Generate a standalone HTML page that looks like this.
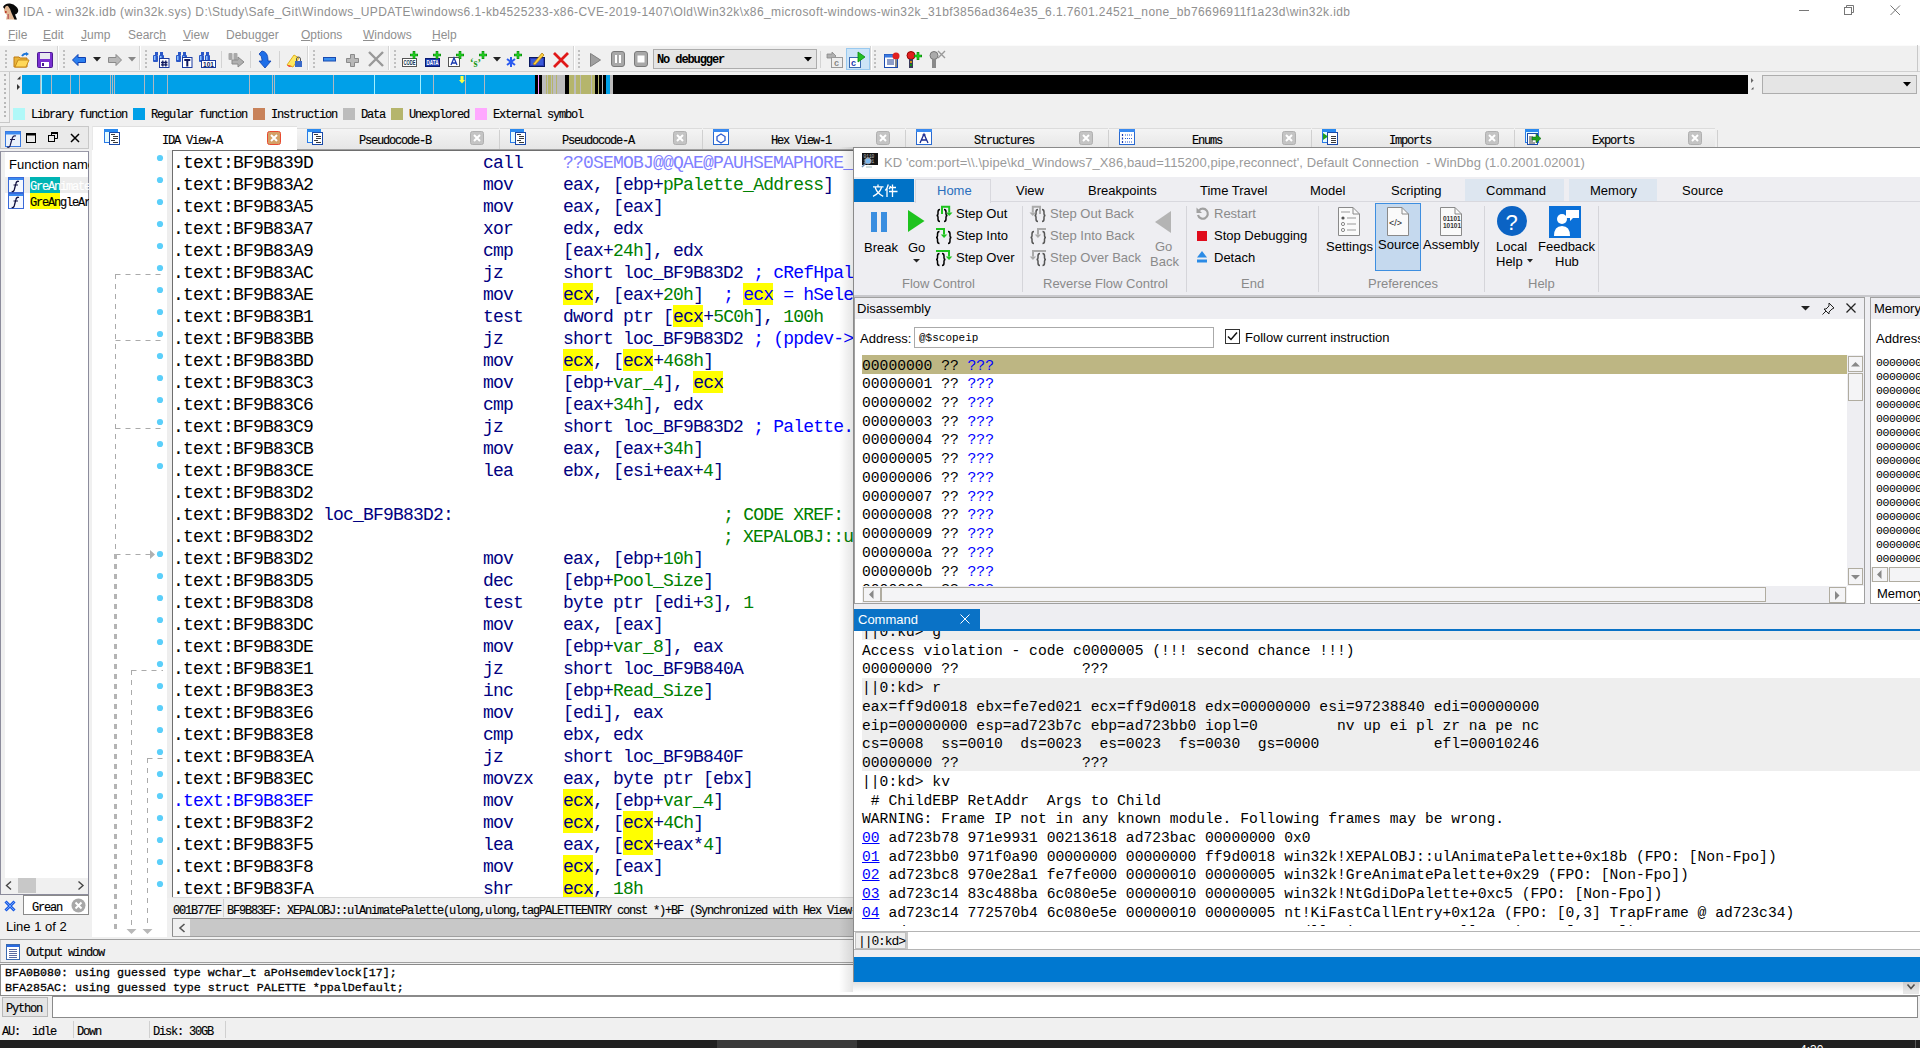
<!DOCTYPE html><html><head><meta charset="utf-8"><title>IDA</title><style>
*{margin:0;padding:0;box-sizing:border-box}
html,body{width:1920px;height:1048px;overflow:hidden;background:#f0f0f0;position:relative}
div{position:absolute}
.t{white-space:pre;line-height:1}
.ui{font-family:"Liberation Sans",sans-serif}
.mono{font-family:"Liberation Mono",monospace}
svg{position:absolute;overflow:visible}
</style></head><body>
<div style="left:0px;top:0px;width:1920px;height:45px;background:#fff"></div>
<svg style="left:1px;top:1px" width="19" height="19" viewBox="0 0 19 19"><path d="M3 5Q5 3 8 4L10 8L11 13L15 18.5H5L6 14Q3 12 3 9Z" fill="#e2b894"/><path d="M2 6Q4 2 9 2.5Q13 3 15 5.5Q18 8 17 11Q16 13 14 13.5L16 18.5H13.5L10.5 12Q9 7 7 5Q4.5 4 3.5 8Z" fill="#0a0a0a"/><circle cx="4.8" cy="11" r="1" fill="#b83020"/><rect x="6.5" y="13" width="1.5" height="5" fill="#a83040" opacity="0.6"/></svg>
<div class="t" style="left:23px;top:5px;font:12px 'Liberation Sans';color:#8f8f8f;letter-spacing:0.41px">IDA - win32k.idb (win32k.sys) D:\Study\Safe_Git\Windows_UPDATE\windows6.1-kb4525233-x86-CVE-2019-1407\Old\Win32k\x86_microsoft-windows-win32k_31bf3856ad364e35_6.1.7601.24521_none_bb76696911f1a23d\win32k.idb</div>
<div style="left:1799px;top:10px;width:10px;height:1px;background:#777"></div>
<svg style="left:1844px;top:5px" width="12" height="12"><rect x="0.5" y="2.5" width="7" height="7" fill="none" stroke="#777"/><path d="M2.5 2.5V0.5H9.5V7.5H7.5" fill="none" stroke="#777"/></svg>
<svg style="left:1890px;top:5px" width="11" height="11"><path d="M0.5 0.5L10 10M10 0.5L0.5 10" stroke="#777" stroke-width="1"/></svg>
<div class="t" style="left:8px;top:28px;font:12px 'Liberation Sans';color:#8f8f8f"><u>F</u>ile</div>
<div class="t" style="left:43px;top:28px;font:12px 'Liberation Sans';color:#8f8f8f"><u>E</u>dit</div>
<div class="t" style="left:81px;top:28px;font:12px 'Liberation Sans';color:#8f8f8f"><u>J</u>ump</div>
<div class="t" style="left:128px;top:28px;font:12px 'Liberation Sans';color:#8f8f8f">Searc<u>h</u></div>
<div class="t" style="left:183px;top:28px;font:12px 'Liberation Sans';color:#8f8f8f"><u>V</u>iew</div>
<div class="t" style="left:226px;top:28px;font:12px 'Liberation Sans';color:#8f8f8f">Debu<u>g</u>ger</div>
<div class="t" style="left:301px;top:28px;font:12px 'Liberation Sans';color:#8f8f8f"><u>O</u>ptions</div>
<div class="t" style="left:363px;top:28px;font:12px 'Liberation Sans';color:#8f8f8f"><u>W</u>indows</div>
<div class="t" style="left:432px;top:28px;font:12px 'Liberation Sans';color:#8f8f8f"><u>H</u>elp</div>
<div style="left:0px;top:45px;width:1920px;height:27px;background:#f0f0f0;border-top:1px solid #fbfbfb;border-bottom:1px solid #d0d0d0"></div>
<div style="left:57px;top:46px;width:1px;height:24px;background:#d5d5d5"></div>
<div style="left:58px;top:46px;width:1px;height:24px;background:#fff"></div>
<div style="left:139px;top:46px;width:1px;height:24px;background:#d5d5d5"></div>
<div style="left:140px;top:46px;width:1px;height:24px;background:#fff"></div>
<div style="left:307px;top:46px;width:1px;height:24px;background:#d5d5d5"></div>
<div style="left:308px;top:46px;width:1px;height:24px;background:#fff"></div>
<div style="left:388px;top:46px;width:1px;height:24px;background:#d5d5d5"></div>
<div style="left:389px;top:46px;width:1px;height:24px;background:#fff"></div>
<div style="left:573px;top:46px;width:1px;height:24px;background:#d5d5d5"></div>
<div style="left:574px;top:46px;width:1px;height:24px;background:#fff"></div>
<div style="left:870px;top:46px;width:1px;height:24px;background:#d5d5d5"></div>
<div style="left:871px;top:46px;width:1px;height:24px;background:#fff"></div>
<div style="left:5px;top:50.0px;width:2px;height:2px;background:#c0c0c0"></div>
<div style="left:5px;top:54.1px;width:2px;height:2px;background:#c0c0c0"></div>
<div style="left:5px;top:58.2px;width:2px;height:2px;background:#c0c0c0"></div>
<div style="left:5px;top:62.3px;width:2px;height:2px;background:#c0c0c0"></div>
<div style="left:5px;top:66.4px;width:2px;height:2px;background:#c0c0c0"></div>
<div style="left:63px;top:50.0px;width:2px;height:2px;background:#c0c0c0"></div>
<div style="left:63px;top:54.1px;width:2px;height:2px;background:#c0c0c0"></div>
<div style="left:63px;top:58.2px;width:2px;height:2px;background:#c0c0c0"></div>
<div style="left:63px;top:62.3px;width:2px;height:2px;background:#c0c0c0"></div>
<div style="left:63px;top:66.4px;width:2px;height:2px;background:#c0c0c0"></div>
<div style="left:145px;top:50.0px;width:2px;height:2px;background:#c0c0c0"></div>
<div style="left:145px;top:54.1px;width:2px;height:2px;background:#c0c0c0"></div>
<div style="left:145px;top:58.2px;width:2px;height:2px;background:#c0c0c0"></div>
<div style="left:145px;top:62.3px;width:2px;height:2px;background:#c0c0c0"></div>
<div style="left:145px;top:66.4px;width:2px;height:2px;background:#c0c0c0"></div>
<div style="left:313px;top:50.0px;width:2px;height:2px;background:#c0c0c0"></div>
<div style="left:313px;top:54.1px;width:2px;height:2px;background:#c0c0c0"></div>
<div style="left:313px;top:58.2px;width:2px;height:2px;background:#c0c0c0"></div>
<div style="left:313px;top:62.3px;width:2px;height:2px;background:#c0c0c0"></div>
<div style="left:313px;top:66.4px;width:2px;height:2px;background:#c0c0c0"></div>
<div style="left:394px;top:50.0px;width:2px;height:2px;background:#c0c0c0"></div>
<div style="left:394px;top:54.1px;width:2px;height:2px;background:#c0c0c0"></div>
<div style="left:394px;top:58.2px;width:2px;height:2px;background:#c0c0c0"></div>
<div style="left:394px;top:62.3px;width:2px;height:2px;background:#c0c0c0"></div>
<div style="left:394px;top:66.4px;width:2px;height:2px;background:#c0c0c0"></div>
<div style="left:578px;top:50.0px;width:2px;height:2px;background:#c0c0c0"></div>
<div style="left:578px;top:54.1px;width:2px;height:2px;background:#c0c0c0"></div>
<div style="left:578px;top:58.2px;width:2px;height:2px;background:#c0c0c0"></div>
<div style="left:578px;top:62.3px;width:2px;height:2px;background:#c0c0c0"></div>
<div style="left:578px;top:66.4px;width:2px;height:2px;background:#c0c0c0"></div>
<div style="left:874px;top:50.0px;width:2px;height:2px;background:#c0c0c0"></div>
<div style="left:874px;top:54.1px;width:2px;height:2px;background:#c0c0c0"></div>
<div style="left:874px;top:58.2px;width:2px;height:2px;background:#c0c0c0"></div>
<div style="left:874px;top:62.3px;width:2px;height:2px;background:#c0c0c0"></div>
<div style="left:874px;top:66.4px;width:2px;height:2px;background:#c0c0c0"></div>
<div style="left:221px;top:51px;width:1px;height:17px;background:#d3d3d3"></div>
<div style="left:250px;top:51px;width:1px;height:17px;background:#d3d3d3"></div>
<div style="left:279px;top:51px;width:1px;height:17px;background:#d3d3d3"></div>
<div style="left:820px;top:51px;width:1px;height:17px;background:#d3d3d3"></div>
<svg style="left:13px;top:52px" width="17" height="16" viewBox="0 0 17 16"><path d="M1 5h5l1 1h7v9H1z" fill="#e8b43a" stroke="#c07a10"/><path d="M2 15l3-7h11l-3 7z" fill="#ffd85a" stroke="#c88a1a"/><path d="M9 4q2-3 5-2" stroke="#1a74d8" stroke-width="2" fill="none"/><path d="M13 0l3 2-3 2z" fill="#1a74d8"/></svg>
<svg style="left:37px;top:52px" width="16" height="16" viewBox="0 0 16 16"><rect x="0.5" y="0.5" width="15" height="15" rx="1" fill="#7a2fd0" stroke="#4a1a90"/><rect x="3" y="1" width="10" height="6" fill="#e8e8f0"/><rect x="4" y="10" width="8" height="5" fill="#fff"/><rect x="5" y="11" width="2" height="3" fill="#4a1a90"/></svg>
<svg style="left:72px;top:54px" width="14" height="12" viewBox="0 0 14 12"><path d="M0.5 6L6 0.5V3.5H13.5V8.5H6V11.5Z" fill="#2a7ff0" stroke="#1040b0"/></svg>
<svg style="left:93px;top:57px" width="8" height="5" viewBox="0 0 8 5"><path d="M0 0H8L4 4.5Z" fill="#222"/></svg>
<svg style="left:108px;top:54px" width="14" height="12" viewBox="0 0 14 12"><path d="M13.5 6L8 0.5V3.5H0.5V8.5H8V11.5Z" fill="#b8b8b8" stroke="#8a8a8a"/></svg>
<svg style="left:128px;top:57px" width="8" height="5" viewBox="0 0 8 5"><path d="M0 0H8L4 4.5Z" fill="#888"/></svg>
<svg style="left:153px;top:52px" width="17" height="16" viewBox="0 0 17 16"><rect x="2" y="0" width="3" height="3" fill="#2a58c8"/><rect x="7" y="0" width="3" height="3" fill="#2a58c8"/><rect x="0" y="3" width="5" height="7" rx="1" fill="#2a58c8"/><rect x="6" y="3" width="5" height="7" rx="1" fill="#2a58c8"/><rect x="1" y="4" width="1.5" height="4" fill="#8ac0ff"/><rect x="7" y="4" width="1.5" height="4" fill="#8ac0ff"/><rect x="6.5" y="6.5" width="9.5" height="9" fill="#fff" stroke="#1a3aa0"/><path d="M9.8 8.5v6M12.8 8.5v6M8 10.5h6.5M8 12.8h6.5" stroke="#101a60" stroke-width="1.3"/></svg>
<svg style="left:176px;top:52px" width="17" height="16" viewBox="0 0 17 16"><rect x="2" y="0" width="3" height="3" fill="#2a58c8"/><rect x="7" y="0" width="3" height="3" fill="#2a58c8"/><rect x="0" y="3" width="5" height="7" rx="1" fill="#2a58c8"/><rect x="6" y="3" width="5" height="7" rx="1" fill="#2a58c8"/><rect x="1" y="4" width="1.5" height="4" fill="#8ac0ff"/><rect x="7" y="4" width="1.5" height="4" fill="#8ac0ff"/><rect x="6.5" y="5.5" width="9.5" height="10" fill="#fff" stroke="#1a3aa0"/><path d="M8.3 8h6M11.3 8v6.5" stroke="#101a60" stroke-width="2"/></svg>
<svg style="left:199px;top:52px" width="17" height="16" viewBox="0 0 17 16"><rect x="2" y="0" width="3" height="3" fill="#2a58c8"/><rect x="7" y="0" width="3" height="3" fill="#2a58c8"/><rect x="0" y="3" width="5" height="7" rx="1" fill="#2a58c8"/><rect x="6" y="3" width="5" height="7" rx="1" fill="#2a58c8"/><rect x="1" y="4" width="1.5" height="4" fill="#8ac0ff"/><rect x="7" y="4" width="1.5" height="4" fill="#8ac0ff"/><rect x="2.5" y="8.5" width="14" height="7" fill="#fff" stroke="#1a3aa0"/><text x="4" y="14.5" font-size="6.5" font-family="Liberation Sans" font-weight="bold" fill="#101a60" textLength="11" lengthAdjust="spacingAndGlyphs">101</text></svg>
<svg style="left:228px;top:52px" width="17" height="16" viewBox="0 0 17 16"><rect x="0.5" y="1" width="4" height="7" rx="1" fill="#a8a8a8"/><rect x="5.5" y="1" width="4" height="7" rx="1" fill="#a8a8a8"/><path d="M4 8h6v-3l6 5-6 5v-3H4z" fill="#b0b0b0" stroke="#8a8a8a"/></svg>
<svg style="left:259px;top:51px" width="12" height="17" viewBox="0 0 12 17"><path d="M3 0q6 1 6 9v1h3l-6 7-6-7h3v-1q0-4-3-6z" fill="#1f6fe8" stroke="#0a3fb0" stroke-width="0.8"/></svg>
<svg style="left:286px;top:52px" width="17" height="16" viewBox="0 0 17 16"><path d="M1 13l7-10 5 3-6 9z" fill="#ffe860" stroke="#e0b020"/><path d="M1 13l2 2 3-1z" fill="#f03030"/><rect x="9" y="9" width="7" height="6" fill="#3a6ac8"/><path d="M10.5 9v-2a2 2 0 0 1 4 0v2" stroke="#555" fill="none"/></svg>
<svg style="left:323px;top:57px" width="13" height="5" viewBox="0 0 13 5"><rect x="0.5" y="0.5" width="12" height="3.5" fill="#3a8ff0" stroke="#1a4ab0"/></svg>
<svg style="left:346px;top:54px" width="13" height="13" viewBox="0 0 13 13"><path d="M4.5 0.5h4v4h4v4h-4v4h-4v-4h-4v-4h4z" fill="#b8b8b8" stroke="#8a8a8a"/></svg>
<svg style="left:368px;top:51px" width="16" height="16" viewBox="0 0 16 16"><path d="M1 1L15 15M15 1L1 15" stroke="#999" stroke-width="2.4"/></svg>
<svg style="left:402px;top:51px" width="18" height="17" viewBox="0 0 18 17"><rect x="0.5" y="7.5" width="14" height="8" fill="#fff" stroke="#555"/><text x="1.5" y="14.3" font-size="7" font-family="Liberation Sans" font-weight="bold" fill="#0a3050" textLength="12" lengthAdjust="spacingAndGlyphs">CODE</text><path d="M12 0v8M8 4h8" stroke="#0a8a0a" stroke-width="2.6"/><path d="M12 0.8v6.4M8.8 4h6.4" stroke="#22d022" stroke-width="1.4"/></svg>
<svg style="left:425px;top:51px" width="18" height="17" viewBox="0 0 18 17"><rect x="0.5" y="7.5" width="14" height="8" fill="#1a3ab0" stroke="#0a1a70"/><text x="1.5" y="14.3" font-size="7" font-family="Liberation Sans" font-weight="bold" fill="#fff" textLength="12" lengthAdjust="spacingAndGlyphs">DATA</text><path d="M12 0v8M8 4h8" stroke="#0a8a0a" stroke-width="2.6"/><path d="M12 0.8v6.4M8.8 4h6.4" stroke="#22d022" stroke-width="1.4"/></svg>
<svg style="left:448px;top:51px" width="18" height="17" viewBox="0 0 18 17"><rect x="0.5" y="6.5" width="11" height="9" fill="#fff" stroke="#555"/><path d="M3 14l3-7 3 7M4 12h4" stroke="#1a3ab0" stroke-width="1.3" fill="none"/><path d="M12 0v8M8 4h8" stroke="#0a8a0a" stroke-width="2.6"/><path d="M12 0.8v6.4M8.8 4h6.4" stroke="#22d022" stroke-width="1.4"/></svg>
<svg style="left:470px;top:51px" width="18" height="17" viewBox="0 0 18 17"><text x="0" y="16" font-size="13" font-family="Liberation Serif" font-weight="bold" fill="#1a9a1a" textLength="11" lengthAdjust="spacingAndGlyphs">‘s’</text><path d="M13 0v8M9 4h8" stroke="#0a8a0a" stroke-width="2.6"/><path d="M13 0.8v6.4M9.8 4h6.4" stroke="#22d022" stroke-width="1.4"/></svg>
<svg style="left:493px;top:57px" width="8" height="5" viewBox="0 0 8 5"><path d="M0 0H8L4 4.5Z" fill="#222"/></svg>
<svg style="left:506px;top:51px" width="17" height="17" viewBox="0 0 17 17"><path d="M5 6v10M1 8l8 6M9 8l-8 6" stroke="#2a5af0" stroke-width="2"/><path d="M12 0v8M8 4h8" stroke="#0a8a0a" stroke-width="2.6"/><path d="M12 0.8v6.4M8.8 4h6.4" stroke="#22d022" stroke-width="1.4"/></svg>
<svg style="left:529px;top:51px" width="17" height="17" viewBox="0 0 17 17"><rect x="0.5" y="6.5" width="15" height="9" fill="#2a3ab8" stroke="#0a1a60"/><rect x="2" y="8" width="12" height="6" fill="#3a5ad8"/><path d="M4 13l9-11 2 2-9 10z" fill="#ffd040" stroke="#b08010" stroke-width="0.8"/></svg>
<svg style="left:553px;top:52px" width="16" height="16" viewBox="0 0 16 16"><path d="M1 1L15 15M15 1L1 15" stroke="#e01818" stroke-width="2.8"/></svg>
<svg style="left:590px;top:53px" width="11" height="14" viewBox="0 0 11 14"><path d="M0.5 0.5L10.5 7L0.5 13.5Z" fill="#a0a0a0" stroke="#808080"/></svg>
<svg style="left:611px;top:51px" width="14" height="16" viewBox="0 0 14 16"><rect x="0.5" y="0.5" width="13" height="15" rx="2.5" fill="#a8a8a8" stroke="#7a7a7a"/><rect x="4" y="4" width="2" height="8" fill="#fff"/><rect x="8" y="4" width="2" height="8" fill="#fff"/></svg>
<svg style="left:634px;top:51px" width="14" height="16" viewBox="0 0 14 16"><rect x="0.5" y="0.5" width="13" height="15" rx="2.5" fill="#a8a8a8" stroke="#7a7a7a"/><rect x="3.5" y="4.5" width="7" height="7" fill="#fff"/></svg>
<div style="left:653px;top:49px;width:164px;height:20px;background:#e5e5e5;border:1px solid #adadad"></div>
<div class="t" style="left:657px;top:53px;font:bold 12px 'Liberation Mono';color:#000;letter-spacing:-1.1px">No debugger</div>
<svg style="left:804px;top:57px" width="8" height="5" viewBox="0 0 8 5"><path d="M0 0H8L4 4.5Z" fill="#000"/></svg>
<svg style="left:826px;top:51px" width="17" height="17" viewBox="0 0 17 17"><path d="M1 3h5v-2l4 4-4 4v-2H1z" fill="#b0b0b0" stroke="#888" stroke-width="0.8"/><rect x="5.5" y="6.5" width="11" height="10" fill="#eee" stroke="#999"/><text x="8" y="15" font-size="9" font-family="Liberation Sans" font-weight="bold" fill="#888">c</text></svg>
<div style="left:846px;top:48px;width:24px;height:22px;background:#cce4f7;border:1px solid #99c9ef"></div>
<svg style="left:849px;top:51px" width="17" height="17" viewBox="0 0 17 17"><rect x="0.5" y="6.5" width="11" height="10" fill="#fff" stroke="#3a6ab0"/><text x="2" y="15" font-size="9" font-family="Liberation Sans" font-weight="bold" fill="#1a3ab0">c</text><path d="M9 1v10l7-5z" fill="#22c022" stroke="#0a8a0a" stroke-width="0.8"/></svg>
<svg style="left:884px;top:51px" width="17" height="17" viewBox="0 0 17 17"><rect x="0.5" y="3.5" width="13" height="13" fill="#fff" stroke="#1a4ab0"/><rect x="0.5" y="3.5" width="13" height="3" fill="#3a7ae0"/><path d="M3 9h7M3 11h7M3 13h7" stroke="#1a3a90"/><circle cx="12" cy="5" r="3.5" fill="#e02020"/><rect x="11" y="8" width="2" height="8" fill="#888"/></svg>
<svg style="left:906px;top:51px" width="18" height="17" viewBox="0 0 18 17"><circle cx="5" cy="4.5" r="4" fill="#e02020" stroke="#900"/><rect x="3" y="8" width="4" height="9" fill="#3a3a5a"/><circle cx="5" cy="11" r="1" fill="#fa0"/><circle cx="5" cy="14" r="1" fill="#0a0"/><path d="M12 1v8M8 5h8" stroke="#0a8a0a" stroke-width="2.6"/><path d="M12 1.8v6.4M8.8 5h6.4" stroke="#22d022" stroke-width="1.4"/></svg>
<svg style="left:929px;top:51px" width="18" height="17" viewBox="0 0 18 17"><circle cx="5" cy="4.5" r="4" fill="#aaa" stroke="#777"/><rect x="3" y="8" width="4" height="9" fill="#8a8a8a"/><path d="M9 0l7 7M16 0l-7 7" stroke="#999" stroke-width="1.4"/></svg>
<div style="left:0px;top:72px;width:1920px;height:51px;background:#f0f0f0"></div>
<div style="left:1917px;top:45px;width:1px;height:27px;background:#c8c8c8"></div>
<div style="left:0px;top:72px;width:10px;height:51px;border-right:1px solid #c8c8c8;border-bottom:1px solid #c8c8c8"></div>
<div style="left:4px;top:74.0px;width:2px;height:2px;background:#b8b8b8"></div>
<div style="left:4px;top:78.6px;width:2px;height:2px;background:#b8b8b8"></div>
<div style="left:4px;top:83.2px;width:2px;height:2px;background:#b8b8b8"></div>
<div style="left:4px;top:87.8px;width:2px;height:2px;background:#b8b8b8"></div>
<div style="left:4px;top:92.4px;width:2px;height:2px;background:#b8b8b8"></div>
<div style="left:4px;top:97.0px;width:2px;height:2px;background:#b8b8b8"></div>
<div style="left:4px;top:101.6px;width:2px;height:2px;background:#b8b8b8"></div>
<div style="left:4px;top:106.19999999999999px;width:2px;height:2px;background:#b8b8b8"></div>
<div style="left:4px;top:110.8px;width:2px;height:2px;background:#b8b8b8"></div>
<div style="left:4px;top:115.4px;width:2px;height:2px;background:#b8b8b8"></div>
<svg style="left:17px;top:76px" width="4" height="4" viewBox="0 0 4 4"><path d="M0 3.5L3.5 0V3.5Z" fill="#333"/></svg>
<svg style="left:17px;top:84px" width="4" height="6" viewBox="0 0 4 6"><path d="M0 0L3 3L0 6Z" fill="#333"/></svg>
<svg style="left:1751px;top:78px" width="4" height="6" viewBox="0 0 4 6"><path d="M0 0L2.5 2.5L0 5Z" fill="#666"/></svg>
<svg style="left:1751px;top:87px" width="4" height="4" viewBox="0 0 4 4"><path d="M0 2.5L2.5 0V2.5Z" fill="#555"/></svg>
<div style="left:22px;top:75px;width:1726px;height:19px;background:#000"></div>
<div style="left:22px;top:75px;width:513px;height:19px;background:#00a0e8"></div>
<div style="left:40px;top:75px;width:1px;height:19px;background:#b0b8c0"></div>
<div style="left:51px;top:75px;width:1px;height:19px;background:#b0b8c0"></div>
<div style="left:70px;top:75px;width:1px;height:19px;background:#b0b8c0"></div>
<div style="left:79px;top:75px;width:1px;height:19px;background:#b0b8c0"></div>
<div style="left:110px;top:75px;width:1px;height:19px;background:#b0b8c0"></div>
<div style="left:112px;top:75px;width:1px;height:19px;background:#b0b8c0"></div>
<div style="left:114px;top:75px;width:1px;height:19px;background:#b0b8c0"></div>
<div style="left:144px;top:75px;width:1px;height:19px;background:#b0b8c0"></div>
<div style="left:153px;top:75px;width:1px;height:19px;background:#b0b8c0"></div>
<div style="left:167px;top:75px;width:1px;height:19px;background:#b0b8c0"></div>
<div style="left:249px;top:75px;width:1px;height:19px;background:#b0b8c0"></div>
<div style="left:272px;top:75px;width:1px;height:19px;background:#b0b8c0"></div>
<div style="left:274px;top:75px;width:1px;height:19px;background:#b0b8c0"></div>
<div style="left:333px;top:75px;width:1px;height:19px;background:#b0b8c0"></div>
<div style="left:433px;top:75px;width:1px;height:19px;background:#b0b8c0"></div>
<div style="left:465px;top:75px;width:1px;height:19px;background:#b0b8c0"></div>
<div style="left:484px;top:75px;width:1px;height:19px;background:#b0b8c0"></div>
<div style="left:41px;top:75px;width:1px;height:19px;background:#a0f0ff"></div>
<div style="left:374px;top:75px;width:1px;height:19px;background:#a0f0ff"></div>
<div style="left:420px;top:75px;width:1px;height:19px;background:#a0f0ff"></div>
<svg style="left:459px;top:76px" width="6" height="8" viewBox="0 0 6 8"><path d="M1.5 0h3v4h1.5L3 7.5L0 4h1.5z" fill="#ffff40"/></svg>
<div style="left:538px;top:75px;width:1px;height:19px;background:#ff90ff"></div>
<div style="left:542px;top:75px;width:4px;height:19px;background:#bcbcbc"></div>
<div style="left:546px;top:75px;width:1px;height:19px;background:#b5b56c"></div>
<div style="left:547px;top:75px;width:1px;height:19px;background:#bcbcbc"></div>
<div style="left:548px;top:75px;width:3px;height:19px;background:#b5b56c"></div>
<div style="left:551px;top:75px;width:1px;height:19px;background:#bcbcbc"></div>
<div style="left:552px;top:75px;width:1px;height:19px;background:#b5b56c"></div>
<div style="left:553px;top:75px;width:3px;height:19px;background:#bcbcbc"></div>
<div style="left:556px;top:75px;width:1px;height:19px;background:#b5b56c"></div>
<div style="left:557px;top:75px;width:8px;height:19px;background:#bcbcbc"></div>
<div style="left:569px;top:75px;width:5px;height:19px;background:#b5b56c"></div>
<div style="left:574px;top:75px;width:2px;height:19px;background:#bcbcbc"></div>
<div style="left:576px;top:75px;width:4px;height:19px;background:#b5b56c"></div>
<div style="left:580px;top:75px;width:1px;height:19px;background:#bcbcbc"></div>
<div style="left:581px;top:75px;width:10px;height:19px;background:#b5b56c"></div>
<div style="left:591px;top:75px;width:1px;height:19px;background:#bcbcbc"></div>
<div style="left:592px;top:75px;width:3px;height:19px;background:#b5b56c"></div>
<div style="left:598px;top:75px;width:1px;height:19px;background:#b5b56c"></div>
<div style="left:602px;top:75px;width:1px;height:19px;background:#bcbcbc"></div>
<div style="left:606px;top:75px;width:4px;height:19px;background:#00a0e8"></div>
<div style="left:610px;top:75px;width:3px;height:19px;background:#bcbcbc"></div>
<div style="left:1762px;top:75px;width:155px;height:19px;background:#e5e5e5;border:1px solid #adadad"></div>
<svg style="left:1903px;top:82px" width="8" height="5" viewBox="0 0 8 5"><path d="M0 0H8L4 4.5Z" fill="#000"/></svg>
<div style="left:13px;top:108px;width:12px;height:12px;background:#b0f8f8"></div>
<div class="t" style="left:31px;top:108px;font:12px 'Liberation Mono';color:#000;letter-spacing:-1.2px;-webkit-text-stroke-width:0.15px">Library function</div>
<div style="left:133px;top:108px;width:12px;height:12px;background:#00a0e8"></div>
<div class="t" style="left:151px;top:108px;font:12px 'Liberation Mono';color:#000;letter-spacing:-1.2px;-webkit-text-stroke-width:0.15px">Regular function</div>
<div style="left:253px;top:108px;width:12px;height:12px;background:#c8825a"></div>
<div class="t" style="left:271px;top:108px;font:12px 'Liberation Mono';color:#000;letter-spacing:-1.2px;-webkit-text-stroke-width:0.15px">Instruction</div>
<div style="left:343px;top:108px;width:12px;height:12px;background:#bcbcbc"></div>
<div class="t" style="left:361px;top:108px;font:12px 'Liberation Mono';color:#000;letter-spacing:-1.2px;-webkit-text-stroke-width:0.15px">Data</div>
<div style="left:391px;top:108px;width:12px;height:12px;background:#b5b56c"></div>
<div class="t" style="left:409px;top:108px;font:12px 'Liberation Mono';color:#000;letter-spacing:-1.2px;-webkit-text-stroke-width:0.15px">Unexplored</div>
<div style="left:475px;top:108px;width:12px;height:12px;background:#ffa8ff"></div>
<div class="t" style="left:493px;top:108px;font:12px 'Liberation Mono';color:#000;letter-spacing:-1.2px;-webkit-text-stroke-width:0.15px">External symbol</div>
<div style="left:0px;top:123px;width:1920px;height:27px;background:#f0f0f0"></div>
<div style="left:0px;top:126px;width:89px;height:23px;background:#eaeaea;border:1px solid #c8c8c8"></div>
<svg style="left:5px;top:131px" width="16" height="16" viewBox="0 0 16 16"><rect x="0.5" y="0.5" width="15" height="15" fill="#eaf2fc" stroke="#3a7ae0"/><rect x="1" y="1" width="14" height="2.5" fill="#3a8af0"/><path d="M11 5q-3-1-4 3l-2 7q-1 2-3 1" stroke="#1a1a50" stroke-width="1.2" fill="none"/><path d="M5 8.5h5" stroke="#1a1a50"/></svg>
<svg style="left:26px;top:133px" width="11" height="11" viewBox="0 0 11 11"><rect x="0.5" y="0.5" width="9" height="9" fill="none" stroke="#000"/><rect x="0.5" y="0.5" width="9" height="2" fill="#000"/></svg>
<svg style="left:48px;top:132px" width="11" height="11" viewBox="0 0 11 11"><rect x="0.5" y="3.5" width="6" height="6" fill="none" stroke="#000"/><path d="M3.5 3.5V0.5H9.5V6.5H6.5" fill="none" stroke="#000"/><rect x="3" y="0" width="7" height="2" fill="#000"/></svg>
<svg style="left:70px;top:133px" width="10" height="10" viewBox="0 0 10 10"><path d="M1 1L9 9M9 1L1 9" stroke="#000" stroke-width="1.5"/></svg>
<div style="left:92px;top:149px;width:1828px;height:1px;background:#a0a0a0"></div>
<div style="left:92px;top:126px;width:205px;height:24px;background:#fff;border-top:1px solid #e0e0e0;border-left:1px solid #e8e8e8"></div>
<svg style="left:104px;top:129px" width="16" height="16" viewBox="0 0 16 16"><rect x="0.5" y="0.5" width="13" height="13" fill="#e4fbff" stroke="#2a7ae8"/><rect x="0" y="0" width="14" height="3" fill="#2a8af0"/><rect x="5.5" y="3.5" width="10" height="12" fill="#fff" stroke="#1a4aa8"/><path d="M7 5.5h4M9 7.5h5M9 9.5h5M7 11.5h4M9 13.5h5" stroke="#3a3a3a"/></svg>
<div class="t" style="left:162px;top:134px;font:12px 'Liberation Mono';color:#000;letter-spacing:-1.2px;-webkit-text-stroke-width:0.15px">IDA View-A</div>
<svg style="left:267px;top:131px" width="14" height="14" viewBox="0 0 14 14"><rect x="0.5" y="0.5" width="13" height="13" rx="2" fill="#d4a066" stroke="#e84a30"/><path d="M4 4l6 6M10 4l-6 6" stroke="#fff" stroke-width="2"/></svg>
<div style="left:297px;top:128px;width:202px;height:21px;background:linear-gradient(#f4f4f4,#e6e6e6);border-top:1px solid #dcdcdc"></div>
<div style="left:499px;top:130px;width:1px;height:19px;background:#d0d0d0"></div>
<svg style="left:307px;top:129px" width="16" height="16" viewBox="0 0 16 16"><rect x="0.5" y="0.5" width="13" height="13" fill="#e4fbff" stroke="#2a7ae8"/><rect x="0" y="0" width="14" height="3" fill="#2a8af0"/><rect x="5.5" y="3.5" width="10" height="12" fill="#fff" stroke="#1a4aa8"/><path d="M7 5.5h4M9 7.5h5M9 9.5h5M7 11.5h4M9 13.5h5" stroke="#3a3a3a"/></svg>
<div class="t" style="left:359px;top:134px;font:12px 'Liberation Mono';color:#000;letter-spacing:-1.2px;-webkit-text-stroke-width:0.15px">Pseudocode-B</div>
<svg style="left:470px;top:131px" width="14" height="14" viewBox="0 0 14 14"><rect x="0.5" y="0.5" width="13" height="13" rx="2" fill="#c4c4c4" stroke="#b0b0b0"/><path d="M4 4l6 6M10 4l-6 6" stroke="#fff" stroke-width="2"/></svg>
<div style="left:500px;top:128px;width:202px;height:21px;background:linear-gradient(#f4f4f4,#e6e6e6);border-top:1px solid #dcdcdc"></div>
<div style="left:702px;top:130px;width:1px;height:19px;background:#d0d0d0"></div>
<svg style="left:510px;top:129px" width="16" height="16" viewBox="0 0 16 16"><rect x="0.5" y="0.5" width="13" height="13" fill="#e4fbff" stroke="#2a7ae8"/><rect x="0" y="0" width="14" height="3" fill="#2a8af0"/><rect x="5.5" y="3.5" width="10" height="12" fill="#fff" stroke="#1a4aa8"/><path d="M7 5.5h4M9 7.5h5M9 9.5h5M7 11.5h4M9 13.5h5" stroke="#3a3a3a"/></svg>
<div class="t" style="left:562px;top:134px;font:12px 'Liberation Mono';color:#000;letter-spacing:-1.2px;-webkit-text-stroke-width:0.15px">Pseudocode-A</div>
<svg style="left:673px;top:131px" width="14" height="14" viewBox="0 0 14 14"><rect x="0.5" y="0.5" width="13" height="13" rx="2" fill="#c4c4c4" stroke="#b0b0b0"/><path d="M4 4l6 6M10 4l-6 6" stroke="#fff" stroke-width="2"/></svg>
<div style="left:703px;top:128px;width:202px;height:21px;background:linear-gradient(#f4f4f4,#e6e6e6);border-top:1px solid #dcdcdc"></div>
<div style="left:905px;top:130px;width:1px;height:19px;background:#d0d0d0"></div>
<svg style="left:713px;top:129px" width="16" height="16" viewBox="0 0 16 16"><rect x="0.5" y="0.5" width="15" height="15" fill="#fff" stroke="#2a6ad0"/><rect x="0" y="0" width="16" height="3" fill="#3a8af0"/><path d="M8 5l4 2.5v4L8 14l-4-2.5v-4z" fill="none" stroke="#2a5ad0" stroke-width="1.3"/></svg>
<div class="t" style="left:771px;top:134px;font:12px 'Liberation Mono';color:#000;letter-spacing:-1.2px;-webkit-text-stroke-width:0.15px">Hex View-1</div>
<svg style="left:876px;top:131px" width="14" height="14" viewBox="0 0 14 14"><rect x="0.5" y="0.5" width="13" height="13" rx="2" fill="#c4c4c4" stroke="#b0b0b0"/><path d="M4 4l6 6M10 4l-6 6" stroke="#fff" stroke-width="2"/></svg>
<div style="left:906px;top:128px;width:202px;height:21px;background:linear-gradient(#f4f4f4,#e6e6e6);border-top:1px solid #dcdcdc"></div>
<div style="left:1108px;top:130px;width:1px;height:19px;background:#d0d0d0"></div>
<svg style="left:916px;top:129px" width="16" height="16" viewBox="0 0 16 16"><rect x="0.5" y="0.5" width="15" height="15" fill="#fff" stroke="#2a6ad0"/><rect x="0" y="0" width="16" height="3" fill="#3a8af0"/><path d="M4 14l4-9 4 9M5.5 11h5M6.5 6h3" stroke="#1a2a90" stroke-width="1.3" fill="none"/></svg>
<div class="t" style="left:974px;top:134px;font:12px 'Liberation Mono';color:#000;letter-spacing:-1.2px;-webkit-text-stroke-width:0.15px">Structures</div>
<svg style="left:1079px;top:131px" width="14" height="14" viewBox="0 0 14 14"><rect x="0.5" y="0.5" width="13" height="13" rx="2" fill="#c4c4c4" stroke="#b0b0b0"/><path d="M4 4l6 6M10 4l-6 6" stroke="#fff" stroke-width="2"/></svg>
<div style="left:1109px;top:128px;width:202px;height:21px;background:linear-gradient(#f4f4f4,#e6e6e6);border-top:1px solid #dcdcdc"></div>
<div style="left:1311px;top:130px;width:1px;height:19px;background:#d0d0d0"></div>
<svg style="left:1119px;top:129px" width="16" height="16" viewBox="0 0 16 16"><rect x="0.5" y="0.5" width="15" height="15" fill="#fff" stroke="#2a6ad0"/><rect x="0" y="0" width="16" height="3" fill="#3a8af0"/><path d="M3.5 5v2M3.5 8.5v2M3.5 12v2" stroke="#1a3ab0" stroke-width="1.2"/><path d="M6 6h7M6 9.5h7M6 13h7" stroke="#2a5ad0" stroke-width="1" stroke-dasharray="1 1"/></svg>
<div class="t" style="left:1192px;top:134px;font:12px 'Liberation Mono';color:#000;letter-spacing:-1.2px;-webkit-text-stroke-width:0.15px">Enums</div>
<svg style="left:1282px;top:131px" width="14" height="14" viewBox="0 0 14 14"><rect x="0.5" y="0.5" width="13" height="13" rx="2" fill="#c4c4c4" stroke="#b0b0b0"/><path d="M4 4l6 6M10 4l-6 6" stroke="#fff" stroke-width="2"/></svg>
<div style="left:1312px;top:128px;width:202px;height:21px;background:linear-gradient(#f4f4f4,#e6e6e6);border-top:1px solid #dcdcdc"></div>
<div style="left:1514px;top:130px;width:1px;height:19px;background:#d0d0d0"></div>
<svg style="left:1322px;top:129px" width="16" height="16" viewBox="0 0 16 16"><rect x="0.5" y="0.5" width="13" height="13" fill="#e4fbff" stroke="#2a7ae8"/><rect x="0" y="0" width="14" height="3" fill="#2a8af0"/><rect x="5.5" y="3.5" width="10" height="12" fill="#fff" stroke="#1a4aa8"/><path d="M9 7.5h5M9 9.5h5M9 11.5h5M9 13.5h5" stroke="#3a3a3a"/><path d="M1 4l5 3.5-5 3.5z" fill="#20a020"/></svg>
<div class="t" style="left:1389px;top:134px;font:12px 'Liberation Mono';color:#000;letter-spacing:-1.2px;-webkit-text-stroke-width:0.15px">Imports</div>
<svg style="left:1485px;top:131px" width="14" height="14" viewBox="0 0 14 14"><rect x="0.5" y="0.5" width="13" height="13" rx="2" fill="#c4c4c4" stroke="#b0b0b0"/><path d="M4 4l6 6M10 4l-6 6" stroke="#fff" stroke-width="2"/></svg>
<div style="left:1515px;top:128px;width:200px;height:21px;background:linear-gradient(#f4f4f4,#e6e6e6);border-top:1px solid #dcdcdc"></div>
<div style="left:1717px;top:130px;width:1px;height:19px;background:#d0d0d0"></div>
<svg style="left:1525px;top:129px" width="16" height="16" viewBox="0 0 16 16"><rect x="0.5" y="0.5" width="13" height="13" fill="#e4fbff" stroke="#2a7ae8"/><rect x="0" y="0" width="14" height="3" fill="#2a8af0"/><rect x="2.5" y="4.5" width="10" height="11" fill="#fff" stroke="#1a4aa8"/><path d="M4 8h4M4 10h4M4 12h4M4 14h6" stroke="#3a3a3a"/><path d="M7 8h4v-3l5 4.5-5 4.5v-3H7z" fill="#20a020" stroke="#0a600a" stroke-width="0.5"/></svg>
<div class="t" style="left:1592px;top:134px;font:12px 'Liberation Mono';color:#000;letter-spacing:-1.2px;-webkit-text-stroke-width:0.15px">Exports</div>
<svg style="left:1688px;top:131px" width="14" height="14" viewBox="0 0 14 14"><rect x="0.5" y="0.5" width="13" height="13" rx="2" fill="#c4c4c4" stroke="#b0b0b0"/><path d="M4 4l6 6M10 4l-6 6" stroke="#fff" stroke-width="2"/></svg>
<div style="left:0px;top:151px;width:89px;height:744px;background:#fff;border:1px solid #8c8c9c;border-top:1px solid #9a9aa8"></div>
<div style="left:1px;top:152px;width:4px;height:742px;background:#f0f0f0"></div>
<div class="t" style="left:9px;top:157px;font:13px 'Liberation Sans';color:#000">Function name</div>
<div style="left:5px;top:177px;width:83px;height:16px;background:#ececec"></div>
<svg style="left:8px;top:177px" width="16" height="16" viewBox="0 0 16 16"><rect x="0.5" y="0.5" width="15" height="15" fill="#f4f8ff" stroke="#3a6ad8"/><rect x="1" y="1" width="14" height="2" fill="#3a8af0"/><path d="M11 4.5q-2.5-1-3.2 2.5l-1.6 6q-0.6 2-2.5 1.4" stroke="#101040" stroke-width="1.3" fill="none"/><path d="M5.5 8h4.5" stroke="#101040" stroke-width="1"/></svg>
<svg style="left:8px;top:193px" width="16" height="16" viewBox="0 0 16 16"><rect x="0.5" y="0.5" width="15" height="15" fill="#f4f8ff" stroke="#3a6ad8"/><rect x="1" y="1" width="14" height="2" fill="#3a8af0"/><path d="M11 4.5q-2.5-1-3.2 2.5l-1.6 6q-0.6 2-2.5 1.4" stroke="#101040" stroke-width="1.3" fill="none"/><path d="M5.5 8h4.5" stroke="#101040" stroke-width="1"/></svg>
<div style="left:30px;top:177px;width:30px;height:16px;background:#00b4b4"></div>
<div style="left:30px;top:193px;width:30px;height:16px;background:#ffff00"></div>
<div class="t" style="left:30px;top:180px;font:12px 'Liberation Mono';color:#fff;letter-spacing:-1.2px;-webkit-text-stroke-width:0.15px">GreAn</div>
<div class="t" style="left:60px;top:180px;font:12px 'Liberation Mono';color:#fff;letter-spacing:-1.2px;-webkit-text-stroke-width:0.15px">imate</div>
<div class="t" style="left:30px;top:196px;font:12px 'Liberation Mono';color:#000;letter-spacing:-1.2px;-webkit-text-stroke-width:0.15px">GreAngleAr</div>
<div style="left:1px;top:878px;width:87px;height:16px;background:#f0f0f0"></div>
<svg style="left:5px;top:881px" width="8" height="9" viewBox="0 0 8 9"><path d="M6 0.5L1.5 4.5L6 8.5" stroke="#444" stroke-width="1.4" fill="none"/></svg>
<svg style="left:77px;top:881px" width="8" height="9" viewBox="0 0 8 9"><path d="M1.5 0.5L6 4.5L1.5 8.5" stroke="#444" stroke-width="1.4" fill="none"/></svg>
<div style="left:18px;top:878px;width:18px;height:15px;background:#c8c8c8"></div>
<svg style="left:4px;top:900px" width="12" height="12" viewBox="0 0 12 12"><path d="M1.5 1.5L10.5 10.5M10.5 1.5L1.5 10.5" stroke="#1a5ae0" stroke-width="3"/><path d="M1.5 1.5L10.5 10.5M10.5 1.5L1.5 10.5" stroke="#6aa0ff" stroke-width="1"/></svg>
<div style="left:23px;top:895px;width:66px;height:20px;background:#fff;border:1px solid #8a8a8a"></div>
<div class="t" style="left:32px;top:901px;font:12px 'Liberation Mono';color:#000;letter-spacing:-1.2px;-webkit-text-stroke-width:0.15px">Grean</div>
<svg style="left:71px;top:898px" width="15" height="15" viewBox="0 0 15 15"><circle cx="7.5" cy="7.5" r="7" fill="#a8a8a8"/><path d="M4.5 4.5l6 6M10.5 4.5l-6 6" stroke="#fff" stroke-width="2"/></svg>
<div class="t" style="left:6px;top:919px;font:13px 'Liberation Sans';color:#000">Line 1 of 2</div>
<div style="left:89px;top:150px;width:3px;height:790px;background:#f0f0f0"></div>
<div style="left:92px;top:150px;width:75px;height:787px;background:#fff"></div>
<div style="left:167px;top:150px;width:5px;height:748px;background:#eeeeee"></div>
<div style="left:172px;top:150px;width:1748px;height:748px;background:#fff;border-left:1px solid #6e6e6e;border-top:1px solid #6e6e6e"></div>
<div style="left:173px;top:151px;width:680px;height:746px;overflow:hidden">
<div class="t" style="left:0px;top:1px;font:18px 'Liberation Mono';letter-spacing:-0.8px;line-height:22px"><span style="color:#000">.text:BF9B839D</span>                 <span style="color:#000080">call    </span><span style="color:#8080ff">??0SEMOBJ@@QAE@PAUHSEMAPHORE__@@@Z</span></div>
<div class="t" style="left:0px;top:23px;font:18px 'Liberation Mono';letter-spacing:-0.8px;line-height:22px"><span style="color:#000">.text:BF9B83A2</span>                 <span style="color:#000080">mov     </span><span style="color:#000080">eax, [ebp+</span><span style="color:#008000">pPalette_Address</span><span style="color:#000080">]</span></div>
<div class="t" style="left:0px;top:45px;font:18px 'Liberation Mono';letter-spacing:-0.8px;line-height:22px"><span style="color:#000">.text:BF9B83A5</span>                 <span style="color:#000080">mov     </span><span style="color:#000080">eax, [eax]</span></div>
<div class="t" style="left:0px;top:67px;font:18px 'Liberation Mono';letter-spacing:-0.8px;line-height:22px"><span style="color:#000">.text:BF9B83A7</span>                 <span style="color:#000080">xor     </span><span style="color:#000080">edx, edx</span></div>
<div class="t" style="left:0px;top:89px;font:18px 'Liberation Mono';letter-spacing:-0.8px;line-height:22px"><span style="color:#000">.text:BF9B83A9</span>                 <span style="color:#000080">cmp     </span><span style="color:#000080">[eax+</span><span style="color:#008000">24h</span><span style="color:#000080">], edx</span></div>
<div class="t" style="left:0px;top:111px;font:18px 'Liberation Mono';letter-spacing:-0.8px;line-height:22px"><span style="color:#000">.text:BF9B83AC</span>                 <span style="color:#000080">jz      </span><span style="color:#000080">short loc_BF9B83D2 </span><span style="color:#0000ff">; cRefHpal</span></div>
<div style="left:390px;top:132px;width:30px;height:22px;background:#ffff00"></div>
<div style="left:570px;top:132px;width:30px;height:22px;background:#ffff00"></div>
<div class="t" style="left:0px;top:133px;font:18px 'Liberation Mono';letter-spacing:-0.8px;line-height:22px"><span style="color:#000">.text:BF9B83AE</span>                 <span style="color:#000080">mov     </span><span style="color:#000080">ecx</span><span style="color:#000080">, [eax+</span><span style="color:#008000">20h</span><span style="color:#000080">]  </span><span style="color:#0000ff">; </span><span style="color:#0000ff">ecx</span><span style="color:#0000ff"> = hSelectedPalette</span></div>
<div style="left:500px;top:154px;width:30px;height:22px;background:#ffff00"></div>
<div class="t" style="left:0px;top:155px;font:18px 'Liberation Mono';letter-spacing:-0.8px;line-height:22px"><span style="color:#000">.text:BF9B83B1</span>                 <span style="color:#000080">test    </span><span style="color:#000080">dword ptr [</span><span style="color:#000080">ecx</span><span style="color:#000080">+</span><span style="color:#008000">5C0h</span><span style="color:#000080">], </span><span style="color:#008000">100h</span></div>
<div class="t" style="left:0px;top:177px;font:18px 'Liberation Mono';letter-spacing:-0.8px;line-height:22px"><span style="color:#000">.text:BF9B83BB</span>                 <span style="color:#000080">jz      </span><span style="color:#000080">short loc_BF9B83D2 </span><span style="color:#0000ff">; (ppdev-&gt;flags)</span></div>
<div style="left:390px;top:198px;width:30px;height:22px;background:#ffff00"></div>
<div style="left:450px;top:198px;width:30px;height:22px;background:#ffff00"></div>
<div class="t" style="left:0px;top:199px;font:18px 'Liberation Mono';letter-spacing:-0.8px;line-height:22px"><span style="color:#000">.text:BF9B83BD</span>                 <span style="color:#000080">mov     </span><span style="color:#000080">ecx</span><span style="color:#000080">, [</span><span style="color:#000080">ecx</span><span style="color:#000080">+</span><span style="color:#008000">468h</span><span style="color:#000080">]</span></div>
<div style="left:520px;top:220px;width:30px;height:22px;background:#ffff00"></div>
<div class="t" style="left:0px;top:221px;font:18px 'Liberation Mono';letter-spacing:-0.8px;line-height:22px"><span style="color:#000">.text:BF9B83C3</span>                 <span style="color:#000080">mov     </span><span style="color:#000080">[ebp+</span><span style="color:#008000">var_4</span><span style="color:#000080">], </span><span style="color:#000080">ecx</span></div>
<div class="t" style="left:0px;top:243px;font:18px 'Liberation Mono';letter-spacing:-0.8px;line-height:22px"><span style="color:#000">.text:BF9B83C6</span>                 <span style="color:#000080">cmp     </span><span style="color:#000080">[eax+</span><span style="color:#008000">34h</span><span style="color:#000080">], edx</span></div>
<div class="t" style="left:0px;top:265px;font:18px 'Liberation Mono';letter-spacing:-0.8px;line-height:22px"><span style="color:#000">.text:BF9B83C9</span>                 <span style="color:#000080">jz      </span><span style="color:#000080">short loc_BF9B83D2 </span><span style="color:#0000ff">; Palette.</span></div>
<div class="t" style="left:0px;top:287px;font:18px 'Liberation Mono';letter-spacing:-0.8px;line-height:22px"><span style="color:#000">.text:BF9B83CB</span>                 <span style="color:#000080">mov     </span><span style="color:#000080">eax, [eax+</span><span style="color:#008000">34h</span><span style="color:#000080">]</span></div>
<div class="t" style="left:0px;top:309px;font:18px 'Liberation Mono';letter-spacing:-0.8px;line-height:22px"><span style="color:#000">.text:BF9B83CE</span>                 <span style="color:#000080">lea     </span><span style="color:#000080">ebx, [esi+eax+</span><span style="color:#008000">4</span><span style="color:#000080">]</span></div>
<div class="t" style="left:0px;top:331px;font:18px 'Liberation Mono';letter-spacing:-0.8px;line-height:22px"><span style="color:#000">.text:BF9B83D2</span></div>
<div class="t" style="left:0px;top:353px;font:18px 'Liberation Mono';letter-spacing:-0.8px;line-height:22px"><span style="color:#000">.text:BF9B83D2</span> <span style="color:#000080">loc_BF9B83D2:</span>                           <span style="color:#008000">; CODE XREF: XEPALOBJ::ulAnimatePalette+2D</span></div>
<div class="t" style="left:0px;top:375px;font:18px 'Liberation Mono';letter-spacing:-0.8px;line-height:22px"><span style="color:#000">.text:BF9B83D2</span>                                         <span style="color:#008000">; XEPALOBJ::ulAnimatePalette+3B</span></div>
<div class="t" style="left:0px;top:397px;font:18px 'Liberation Mono';letter-spacing:-0.8px;line-height:22px"><span style="color:#000">.text:BF9B83D2</span>                 <span style="color:#000080">mov     </span><span style="color:#000080">eax, [ebp+</span><span style="color:#008000">10h</span><span style="color:#000080">]</span></div>
<div class="t" style="left:0px;top:419px;font:18px 'Liberation Mono';letter-spacing:-0.8px;line-height:22px"><span style="color:#000">.text:BF9B83D5</span>                 <span style="color:#000080">dec     </span><span style="color:#000080">[ebp+</span><span style="color:#008000">Pool_Size</span><span style="color:#000080">]</span></div>
<div class="t" style="left:0px;top:441px;font:18px 'Liberation Mono';letter-spacing:-0.8px;line-height:22px"><span style="color:#000">.text:BF9B83D8</span>                 <span style="color:#000080">test    </span><span style="color:#000080">byte ptr [edi+</span><span style="color:#008000">3</span><span style="color:#000080">], </span><span style="color:#008000">1</span></div>
<div class="t" style="left:0px;top:463px;font:18px 'Liberation Mono';letter-spacing:-0.8px;line-height:22px"><span style="color:#000">.text:BF9B83DC</span>                 <span style="color:#000080">mov     </span><span style="color:#000080">eax, [eax]</span></div>
<div class="t" style="left:0px;top:485px;font:18px 'Liberation Mono';letter-spacing:-0.8px;line-height:22px"><span style="color:#000">.text:BF9B83DE</span>                 <span style="color:#000080">mov     </span><span style="color:#000080">[ebp+</span><span style="color:#008000">var_8</span><span style="color:#000080">], eax</span></div>
<div class="t" style="left:0px;top:507px;font:18px 'Liberation Mono';letter-spacing:-0.8px;line-height:22px"><span style="color:#000">.text:BF9B83E1</span>                 <span style="color:#000080">jz      </span><span style="color:#000080">short loc_BF9B840A</span></div>
<div class="t" style="left:0px;top:529px;font:18px 'Liberation Mono';letter-spacing:-0.8px;line-height:22px"><span style="color:#000">.text:BF9B83E3</span>                 <span style="color:#000080">inc     </span><span style="color:#000080">[ebp+</span><span style="color:#008000">Read_Size</span><span style="color:#000080">]</span></div>
<div class="t" style="left:0px;top:551px;font:18px 'Liberation Mono';letter-spacing:-0.8px;line-height:22px"><span style="color:#000">.text:BF9B83E6</span>                 <span style="color:#000080">mov     </span><span style="color:#000080">[edi], eax</span></div>
<div class="t" style="left:0px;top:573px;font:18px 'Liberation Mono';letter-spacing:-0.8px;line-height:22px"><span style="color:#000">.text:BF9B83E8</span>                 <span style="color:#000080">cmp     </span><span style="color:#000080">ebx, edx</span></div>
<div class="t" style="left:0px;top:595px;font:18px 'Liberation Mono';letter-spacing:-0.8px;line-height:22px"><span style="color:#000">.text:BF9B83EA</span>                 <span style="color:#000080">jz      </span><span style="color:#000080">short loc_BF9B840F</span></div>
<div class="t" style="left:0px;top:617px;font:18px 'Liberation Mono';letter-spacing:-0.8px;line-height:22px"><span style="color:#000">.text:BF9B83EC</span>                 <span style="color:#000080">movzx   </span><span style="color:#000080">eax, byte ptr [ebx]</span></div>
<div style="left:390px;top:638px;width:30px;height:22px;background:#ffff00"></div>
<div class="t" style="left:0px;top:639px;font:18px 'Liberation Mono';letter-spacing:-0.8px;line-height:22px"><span style="color:#0000ff">.text:BF9B83EF</span>                 <span style="color:#000080">mov     </span><span style="color:#000080">ecx</span><span style="color:#000080">, [ebp+</span><span style="color:#008000">var_4</span><span style="color:#000080">]</span></div>
<div style="left:390px;top:660px;width:30px;height:22px;background:#ffff00"></div>
<div style="left:450px;top:660px;width:30px;height:22px;background:#ffff00"></div>
<div class="t" style="left:0px;top:661px;font:18px 'Liberation Mono';letter-spacing:-0.8px;line-height:22px"><span style="color:#000">.text:BF9B83F2</span>                 <span style="color:#000080">mov     </span><span style="color:#000080">ecx</span><span style="color:#000080">, [</span><span style="color:#000080">ecx</span><span style="color:#000080">+</span><span style="color:#008000">4Ch</span><span style="color:#000080">]</span></div>
<div style="left:450px;top:682px;width:30px;height:22px;background:#ffff00"></div>
<div class="t" style="left:0px;top:683px;font:18px 'Liberation Mono';letter-spacing:-0.8px;line-height:22px"><span style="color:#000">.text:BF9B83F5</span>                 <span style="color:#000080">lea     </span><span style="color:#000080">eax, [</span><span style="color:#000080">ecx</span><span style="color:#000080">+eax*</span><span style="color:#008000">4</span><span style="color:#000080">]</span></div>
<div style="left:390px;top:704px;width:30px;height:22px;background:#ffff00"></div>
<div class="t" style="left:0px;top:705px;font:18px 'Liberation Mono';letter-spacing:-0.8px;line-height:22px"><span style="color:#000">.text:BF9B83F8</span>                 <span style="color:#000080">mov     </span><span style="color:#000080">ecx</span><span style="color:#000080">, [eax]</span></div>
<div style="left:390px;top:726px;width:30px;height:22px;background:#ffff00"></div>
<div class="t" style="left:0px;top:727px;font:18px 'Liberation Mono';letter-spacing:-0.8px;line-height:22px"><span style="color:#000">.text:BF9B83FA</span>                 <span style="color:#000080">shr     </span><span style="color:#000080">ecx</span><span style="color:#000080">, </span><span style="color:#008000">18h</span></div>
</div>
<svg style="left:92px;top:150px" width="75" height="787" viewBox="0 0 75 787"><circle cx="68" cy="8" r="3.1" fill="#5bcffa"/><circle cx="68" cy="30" r="3.1" fill="#5bcffa"/><circle cx="68" cy="52" r="3.1" fill="#5bcffa"/><circle cx="68" cy="74" r="3.1" fill="#5bcffa"/><circle cx="68" cy="96" r="3.1" fill="#5bcffa"/><circle cx="68" cy="118" r="3.1" fill="#5bcffa"/><circle cx="68" cy="140" r="3.1" fill="#5bcffa"/><circle cx="68" cy="162" r="3.1" fill="#5bcffa"/><circle cx="68" cy="184" r="3.1" fill="#5bcffa"/><circle cx="68" cy="206" r="3.1" fill="#5bcffa"/><circle cx="68" cy="228" r="3.1" fill="#5bcffa"/><circle cx="68" cy="250" r="3.1" fill="#5bcffa"/><circle cx="68" cy="272" r="3.1" fill="#5bcffa"/><circle cx="68" cy="294" r="3.1" fill="#5bcffa"/><circle cx="68" cy="316" r="3.1" fill="#5bcffa"/><circle cx="68" cy="404" r="3.1" fill="#5bcffa"/><circle cx="68" cy="426" r="3.1" fill="#5bcffa"/><circle cx="68" cy="448" r="3.1" fill="#5bcffa"/><circle cx="68" cy="470" r="3.1" fill="#5bcffa"/><circle cx="68" cy="492" r="3.1" fill="#5bcffa"/><circle cx="68" cy="514" r="3.1" fill="#5bcffa"/><circle cx="68" cy="536" r="3.1" fill="#5bcffa"/><circle cx="68" cy="558" r="3.1" fill="#5bcffa"/><circle cx="68" cy="580" r="3.1" fill="#5bcffa"/><circle cx="68" cy="602" r="3.1" fill="#5bcffa"/><circle cx="68" cy="624" r="3.1" fill="#5bcffa"/><circle cx="68" cy="646" r="3.1" fill="#5bcffa"/><circle cx="68" cy="668" r="3.1" fill="#5bcffa"/><circle cx="68" cy="690" r="3.1" fill="#5bcffa"/><circle cx="68" cy="712" r="3.1" fill="#5bcffa"/><circle cx="68" cy="734" r="3.1" fill="#5bcffa"/><path d="M23.5 124.5H69" stroke="#aaaaaa" stroke-width="1" stroke-dasharray="5 5"/><path d="M23.5 190.5H69" stroke="#aaaaaa" stroke-width="1" stroke-dasharray="5 5"/><path d="M23.5 278.5H69" stroke="#aaaaaa" stroke-width="1" stroke-dasharray="5 5"/><path d="M23.5 124V404" stroke="#aaaaaa" stroke-width="1" stroke-dasharray="5 5"/><path d="M23.5 404.5H58" stroke="#aaaaaa" stroke-width="1" stroke-dasharray="5 5"/><path d="M58 400L63 404.5L58 409Z" fill="#b0b0b0"/><path d="M23.5 404V780" stroke="#b4b4b4" stroke-width="3" stroke-dasharray="5 5"/><path d="M39.5 520.5H71" stroke="#aaaaaa" stroke-width="1" stroke-dasharray="5 5"/><path d="M39.5 520V778" stroke="#aaaaaa" stroke-width="1" stroke-dasharray="5 5"/><path d="M55.5 608.5H71" stroke="#aaaaaa" stroke-width="1" stroke-dasharray="5 5"/><path d="M55.5 608V778" stroke="#aaaaaa" stroke-width="1" stroke-dasharray="5 5"/><path d="M34.5 779H44.5L39.5 784Z" fill="#b8b8b8"/><path d="M50.5 779H60.5L55.5 784Z" fill="#b8b8b8"/></svg>
<div style="left:172px;top:897px;width:1748px;height:21px;background:#f0f0f0;border-top:1px solid #d8d8d8"></div>
<div class="t" style="left:173px;top:904px;font:12px 'Liberation Mono';color:#000;letter-spacing:-1.2px;-webkit-text-stroke-width:0.15px">001B77EF</div>
<div style="left:223px;top:899px;width:1px;height:18px;background:#d0d0d0"></div>
<div class="t" style="left:227px;top:904px;font:12px 'Liberation Mono';color:#000;letter-spacing:-1.2px;-webkit-text-stroke-width:0.15px">BF9B83EF: XEPALOBJ::ulAnimatePalette(ulong,ulong,tagPALETTEENTRY const *)+BF (Synchronized with Hex View-1)</div>
<div style="left:172px;top:918px;width:1748px;height:19px;background:#f0f0f0;border-left:1px solid #8a8a8a;border-top:1px solid #8a8a8a"></div>
<div style="left:190px;top:919px;width:1730px;height:18px;background:#c8c8c8"></div>
<svg style="left:178px;top:923px" width="8" height="10" viewBox="0 0 8 10"><path d="M6.5 1L2 5L6.5 9" stroke="#555" stroke-width="1.6" fill="none"/></svg>
<div style="left:172px;top:936px;width:1748px;height:1px;background:#a0a0a0"></div>
<div style="left:0px;top:939px;width:1920px;height:1px;background:#a0a0a0"></div>
<div style="left:0px;top:940px;width:1920px;height:23px;background:#f0f0f0;border-left:1px solid #c8c8c8"></div>
<svg style="left:6px;top:944px" width="14" height="16" viewBox="0 0 14 16"><rect x="0.5" y="0.5" width="13" height="15" fill="#fff" stroke="#3a6ab0"/><rect x="1" y="1" width="12" height="2" fill="#2a6ae0"/><path d="M3 5.5h8M3 7.5h8M3 9.5h8M3 11.5h8M3 13.5h8" stroke="#5a6aa0"/></svg>
<div class="t" style="left:26px;top:946px;font:12px 'Liberation Mono';color:#000;letter-spacing:-1.2px;-webkit-text-stroke-width:0.15px">Output window</div>
<div style="left:0px;top:962px;width:1920px;height:1px;background:#a0a0a0"></div>
<div style="left:0px;top:964px;width:1920px;height:32px;background:#fff;border-top:1px solid #8a8a8a;border-bottom:1px solid #8a8a8a;border-left:1px solid #8a8a8a"></div>
<div class="t" style="left:5px;top:966px;font:11.67px 'Liberation Mono';line-height:15px;-webkit-text-stroke-width:0.3px;color:#000">BFA0B080: using guessed type wchar_t aPoHsemdevlock[17];</div>
<div class="t" style="left:5px;top:981px;font:11.67px 'Liberation Mono';line-height:15px;-webkit-text-stroke-width:0.3px;color:#000">BFA285AC: using guessed type struct PALETTE *ppalDefault;</div>
<div style="left:0px;top:996px;width:1920px;height:23px;background:#f0f0f0"></div>
<div style="left:2px;top:997px;width:46px;height:20px;background:#e5e5e5;border:1px solid #b8b8b8"></div>
<div class="t" style="left:6px;top:1002px;font:12px 'Liberation Mono';color:#000;letter-spacing:-1.2px;-webkit-text-stroke-width:0.15px">Python</div>
<div style="left:52px;top:996px;width:1866px;height:22px;background:#fff;border:1px solid #8a8a8a"></div>
<div style="left:0px;top:1019px;width:1920px;height:21px;background:#f0f0f0"></div>
<div class="t" style="left:2px;top:1025px;font:12px 'Liberation Mono';color:#000;letter-spacing:-1.2px;-webkit-text-stroke-width:0.15px">AU:  idle</div>
<div class="t" style="left:77px;top:1025px;font:12px 'Liberation Mono';color:#000;letter-spacing:-1.2px;-webkit-text-stroke-width:0.15px">Down</div>
<div class="t" style="left:153px;top:1025px;font:12px 'Liberation Mono';color:#000;letter-spacing:-1.2px;-webkit-text-stroke-width:0.15px">Disk: 30GB</div>
<div style="left:73px;top:1021px;width:1px;height:17px;background:#d0d0d0"></div>
<div style="left:149px;top:1021px;width:1px;height:17px;background:#d0d0d0"></div>
<div style="left:225px;top:1021px;width:1px;height:17px;background:#d0d0d0"></div>
<div style="left:0px;top:1040px;width:1920px;height:8px;background:#202020"></div>
<div style="left:717px;top:1040px;width:140px;height:8px;background:#3a3a3a"></div>
<div style="left:1915px;top:1040px;width:1px;height:8px;background:#5a5a5a"></div>
<div class="t" style="left:1800px;top:1043px;font:12px 'Liberation Sans';color:#fff">4:30</div>
<div style="left:1903px;top:982px;width:16px;height:12px;background:#e8e8e8"></div>
<svg style="left:1907px;top:984px" width="8" height="6" viewBox="0 0 8 6"><path d="M0.5 0.5L4 4.5L7.5 0.5" stroke="#555" stroke-width="1.6" fill="none"/></svg>
<div style="left:839px;top:147px;width:14px;height:845px;background:linear-gradient(to left, rgba(0,0,0,0.10), rgba(0,0,0,0))"></div>
<div style="left:853px;top:982px;width:1080px;height:10px;background:linear-gradient(rgba(0,0,0,0.12), rgba(0,0,0,0))"></div>
<div style="left:853px;top:147px;width:1067px;height:835px;background:#eeeef2;border-left:1px solid #8a8a8a;border-top:1px solid #8a8a8a"></div>
<div style="left:854px;top:148px;width:1066px;height:29px;background:#fff"></div>
<svg style="left:861px;top:153px" width="18" height="16" viewBox="0 0 18 16"><rect x="1" y="0" width="16" height="12" fill="#151515"/><text x="2.5" y="5" font-size="4.5" font-family="Liberation Mono" fill="#bbb">0110</text><text x="2.5" y="10" font-size="4.5" font-family="Liberation Mono" fill="#bbb">1101</text><circle cx="7" cy="8" r="3" fill="#7ab8f0" stroke="#aaa" stroke-width="0.8"/><path d="M5 10L1 14" stroke="#6a8ab0" stroke-width="1.4"/><path d="M5 14h6" stroke="#8aa" stroke-width="0.8"/></svg>
<div class="t" style="left:884px;top:155px;font:13px 'Liberation Sans';color:#9a9a9a;letter-spacing:0.08px">KD 'com:port=\\.\pipe\kd_Windows7_X86,baud=115200,pipe,reconnect', Default Connection  - WinDbg (1.0.2001.02001)</div>
<div style="left:854px;top:177px;width:1066px;height:25px;background:#eeeef2;border-bottom:1px solid #d8d8de"></div>
<div style="left:854px;top:179px;width:60px;height:23px;background:#0072c6"></div>
<svg style="left:872px;top:184px" width="26" height="13" viewBox="0 0 26 13"><g stroke="#fff" stroke-width="1.3" fill="none"><path d="M6 0.5v2M1 2.8h10.5M3.2 3.5q2 6 8 8.8M9.5 3.5q-2 6-8.5 8.8"/><path d="M16.3 0.5q-1 4-3 6M15 4v9M20.5 0.5v12.5M18 3.5h6M17 7.5h8.5M18.5 2q-0.5 2-1.5 3"/></g></svg>
<div style="left:915px;top:179px;width:76px;height:24px;background:#eeeef2;border:1px solid #d8d8de;border-bottom:none"></div>
<div style="left:1465px;top:179px;width:99px;height:22px;background:#dde6f0"></div>
<div style="left:1569px;top:179px;width:88px;height:22px;background:#dde6f0"></div>
<div class="t" style="left:937px;top:183px;font:13px 'Liberation Sans';color:#2a6ebd">Home</div>
<div class="t" style="left:1016px;top:183px;font:13px 'Liberation Sans';color:#000">View</div>
<div class="t" style="left:1088px;top:183px;font:13px 'Liberation Sans';color:#000">Breakpoints</div>
<div class="t" style="left:1200px;top:183px;font:13px 'Liberation Sans';color:#000">Time Travel</div>
<div class="t" style="left:1310px;top:183px;font:13px 'Liberation Sans';color:#000">Model</div>
<div class="t" style="left:1391px;top:183px;font:13px 'Liberation Sans';color:#000">Scripting</div>
<div class="t" style="left:1486px;top:183px;font:13px 'Liberation Sans';color:#000">Command</div>
<div class="t" style="left:1590px;top:183px;font:13px 'Liberation Sans';color:#000">Memory</div>
<div class="t" style="left:1682px;top:183px;font:13px 'Liberation Sans';color:#000">Source</div>
<div style="left:854px;top:295px;width:1066px;height:2px;background:#c8c8cc"></div>
<div style="left:871px;top:212px;width:6px;height:20px;background:#3a8ee0"></div>
<div style="left:881px;top:212px;width:6px;height:20px;background:#3a8ee0"></div>
<div class="t" style="left:864px;top:240px;font:13px 'Liberation Sans';color:#000">Break</div>
<svg style="left:908px;top:210px" width="17" height="22" viewBox="0 0 17 22"><path d="M0 0L16.5 11L0 22Z" fill="#1ec31e"/></svg>
<div class="t" style="left:908px;top:240px;font:13px 'Liberation Sans';color:#000">Go</div>
<svg style="left:913px;top:259px" width="7" height="4" viewBox="0 0 7 4"><path d="M0 0H7L3.5 3.5Z" fill="#222"/></svg>
<svg style="left:934px;top:205px" width="20" height="18" viewBox="0 0 20 18"><path d="M6.0 4.5Q4.0 4.5 4.0 7V9Q4.0 10.5 2.5 10.5Q4.0 10.5 4.0 12V14Q4.0 16.5 6.0 16.5" stroke="#000" stroke-width="1.5" fill="none"/><path d="M10 4.5Q12 4.5 12 7V9Q12 10.5 13.5 10.5Q12 10.5 12 12V14Q12 16.5 10 16.5" stroke="#000" stroke-width="1.5" fill="none"/><path d="M8 9V1.8H15.2V7.5" stroke="#1ec31e" stroke-width="2" fill="none"/><path d="M12 7.5h6.5l-3.25 3.5z" fill="#1ec31e"/></svg>
<div class="t" style="left:956px;top:206px;font:13px 'Liberation Sans';color:#000">Step Out</div>
<svg style="left:934px;top:227px" width="20" height="18" viewBox="0 0 20 18"><path d="M5.5 4.5Q3.5 4.5 3.5 7V9Q3.5 10.5 2 10.5Q3.5 10.5 3.5 12V14Q3.5 16.5 5.5 16.5" stroke="#000" stroke-width="1.5" fill="none"/><path d="M14 4.5Q16 4.5 16 7V9Q16 10.5 17.5 10.5Q16 10.5 16 12V14Q16 16.5 14 16.5" stroke="#000" stroke-width="1.5" fill="none"/><path d="M2 2H10V7.5" stroke="#1ec31e" stroke-width="2" fill="none"/><path d="M6.8 7.5h6.5l-3.25 3.5z" fill="#1ec31e"/></svg>
<div class="t" style="left:956px;top:228px;font:13px 'Liberation Sans';color:#000">Step Into</div>
<svg style="left:934px;top:249px" width="20" height="18" viewBox="0 0 20 18"><path d="M5.5 4.5Q3.5 4.5 3.5 7V9Q3.5 10.5 2 10.5Q3.5 10.5 3.5 12V14Q3.5 16.5 5.5 16.5" stroke="#000" stroke-width="1.5" fill="none"/><path d="M8 4.5Q10 4.5 10 7V9Q10 10.5 11.5 10.5Q10 10.5 10 12V14Q10 16.5 8 16.5" stroke="#000" stroke-width="1.5" fill="none"/><path d="M2 2H15V7.5" stroke="#1ec31e" stroke-width="2" fill="none"/><path d="M11.8 7.5h6.5l-3.25 3.5z" fill="#1ec31e"/></svg>
<div class="t" style="left:956px;top:250px;font:13px 'Liberation Sans';color:#000">Step Over</div>
<div class="t" style="left:902px;top:276px;font:13px 'Liberation Sans';color:#8a8a8a">Flow Control</div>
<div style="left:1022px;top:206px;width:1px;height:86px;background:#d5d5da"></div>
<div style="left:1186px;top:206px;width:1px;height:86px;background:#d5d5da"></div>
<div style="left:1318px;top:206px;width:1px;height:86px;background:#d5d5da"></div>
<div style="left:1484px;top:206px;width:1px;height:86px;background:#d5d5da"></div>
<div style="left:1598px;top:206px;width:1px;height:86px;background:#d5d5da"></div>
<svg style="left:1028px;top:205px" width="20" height="18" viewBox="0 0 20 18"><path d="M10.0 4.5Q8.0 4.5 8.0 7V9Q8.0 10.5 6.5 10.5Q8.0 10.5 8.0 12V14Q8.0 16.5 10.0 16.5" stroke="#555" stroke-width="1.5" fill="none"/><path d="M14.0 4.5Q16.0 4.5 16.0 7V9Q16.0 10.5 17.5 10.5Q16.0 10.5 16.0 12V14Q16.0 16.5 14.0 16.5" stroke="#555" stroke-width="1.5" fill="none"/><g transform="translate(20,0) scale(-1,1)"><path d="M8 9V1.8H15.2V7.5" stroke="#aaaaaa" stroke-width="2" fill="none"/><path d="M12 7.5h6.5l-3.25 3.5z" fill="#aaaaaa"/></g></svg>
<div class="t" style="left:1050px;top:206px;font:13px 'Liberation Sans';color:#8a8a8a">Step Out Back</div>
<svg style="left:1028px;top:227px" width="20" height="18" viewBox="0 0 20 18"><path d="M6.0 4.5Q4.0 4.5 4.0 7V9Q4.0 10.5 2.5 10.5Q4.0 10.5 4.0 12V14Q4.0 16.5 6.0 16.5" stroke="#555" stroke-width="1.5" fill="none"/><path d="M14.5 4.5Q16.5 4.5 16.5 7V9Q16.5 10.5 18.0 10.5Q16.5 10.5 16.5 12V14Q16.5 16.5 14.5 16.5" stroke="#555" stroke-width="1.5" fill="none"/><g transform="translate(20,0) scale(-1,1)"><path d="M2 2H10V7.5" stroke="#aaaaaa" stroke-width="2" fill="none"/><path d="M6.8 7.5h6.5l-3.25 3.5z" fill="#aaaaaa"/></g></svg>
<div class="t" style="left:1050px;top:228px;font:13px 'Liberation Sans';color:#8a8a8a">Step Into Back</div>
<svg style="left:1028px;top:249px" width="20" height="18" viewBox="0 0 20 18"><path d="M12.0 4.5Q10.0 4.5 10.0 7V9Q10.0 10.5 8.5 10.5Q10.0 10.5 10.0 12V14Q10.0 16.5 12.0 16.5" stroke="#555" stroke-width="1.5" fill="none"/><path d="M14.5 4.5Q16.5 4.5 16.5 7V9Q16.5 10.5 18.0 10.5Q16.5 10.5 16.5 12V14Q16.5 16.5 14.5 16.5" stroke="#555" stroke-width="1.5" fill="none"/><g transform="translate(20,0) scale(-1,1)"><path d="M2 2H15V7.5" stroke="#aaaaaa" stroke-width="2" fill="none"/><path d="M11.8 7.5h6.5l-3.25 3.5z" fill="#aaaaaa"/></g></svg>
<div class="t" style="left:1050px;top:250px;font:13px 'Liberation Sans';color:#8a8a8a">Step Over Back</div>
<svg style="left:1155px;top:211px" width="16" height="22" viewBox="0 0 16 22"><path d="M16 0L0 11L16 22Z" fill="#b4b4b4"/></svg>
<div class="t" style="left:1155px;top:239px;font:13px 'Liberation Sans';color:#8a8a8a">Go</div>
<div class="t" style="left:1150px;top:254px;font:13px 'Liberation Sans';color:#8a8a8a">Back</div>
<div class="t" style="left:1043px;top:276px;font:13px 'Liberation Sans';color:#8a8a8a">Reverse Flow Control</div>
<svg style="left:1196px;top:207px" width="13" height="13" viewBox="0 0 13 13"><path d="M3 3.5A5 5 0 1 1 2 8" stroke="#a0a0a0" stroke-width="2.2" fill="none"/><path d="M0.5 0.5V6H6Z" fill="#a0a0a0"/></svg>
<div class="t" style="left:1214px;top:206px;font:13px 'Liberation Sans';color:#8a8a8a">Restart</div>
<div style="left:1197px;top:231px;width:10px;height:10px;background:#e00b1c"></div>
<div class="t" style="left:1214px;top:228px;font:13px 'Liberation Sans';color:#000">Stop Debugging</div>
<svg style="left:1197px;top:251px" width="10" height="12" viewBox="0 0 10 12"><path d="M5 0L10 6.5H0Z" fill="#2b8be6"/><rect x="0" y="8.5" width="10" height="3" fill="#2b8be6"/></svg>
<div class="t" style="left:1214px;top:250px;font:13px 'Liberation Sans';color:#000">Detach</div>
<div class="t" style="left:1241px;top:276px;font:13px 'Liberation Sans';color:#8a8a8a">End</div>
<svg style="left:1338px;top:207px" width="22" height="29" viewBox="0 0 22 29"><path d="M0.5 0.5H15L21.5 7V28.5H0.5Z" fill="#fafafa" stroke="#8a8a8a"/><path d="M15 0.5V7H21.5" fill="none" stroke="#8a8a8a"/><circle cx="5" cy="11" r="1.6" fill="#555"/><circle cx="5" cy="17" r="1.6" fill="none" stroke="#888"/><circle cx="5" cy="23" r="1.6" fill="none" stroke="#888"/><path d="M9 11h9M9 17h9M9 23h9M3 5h9" stroke="#999"/></svg>
<div class="t" style="left:1326px;top:239px;font:13px 'Liberation Sans';color:#000">Settings</div>
<div style="left:1375px;top:203px;width:46px;height:68px;background:#c5d9ee;border:1px solid #3d8ee0"></div>
<svg style="left:1387px;top:207px" width="22" height="29" viewBox="0 0 22 29"><path d="M0.5 0.5H15L21.5 7V28.5H0.5Z" fill="#fafafa" stroke="#8a8a8a"/><path d="M15 0.5V7H21.5" fill="none" stroke="#8a8a8a"/><text x="2" y="19" font-size="9" font-family="Liberation Sans" fill="#222">&lt;/&gt;</text></svg>
<div class="t" style="left:1378px;top:237px;font:13px 'Liberation Sans';color:#000">Source</div>
<svg style="left:1440px;top:207px" width="22" height="29" viewBox="0 0 22 29"><path d="M0.5 0.5H15L21.5 7V28.5H0.5Z" fill="#fafafa" stroke="#8a8a8a"/><path d="M15 0.5V7H21.5" fill="none" stroke="#8a8a8a"/><text x="3" y="14" font-size="6.5" font-family="Liberation Sans" font-weight="bold" fill="#333">01101</text><text x="3" y="21" font-size="6.5" font-family="Liberation Sans" font-weight="bold" fill="#333">10101</text></svg>
<div class="t" style="left:1423px;top:237px;font:13px 'Liberation Sans';color:#000">Assembly</div>
<div class="t" style="left:1368px;top:276px;font:13px 'Liberation Sans';color:#8a8a8a">Preferences</div>
<svg style="left:1497px;top:206px" width="30" height="30" viewBox="0 0 30 30"><circle cx="15" cy="15" r="15" fill="#0b63c4"/><text x="8.5" y="24" font-size="22" font-family="Liberation Sans" fill="#fff">?</text></svg>
<div class="t" style="left:1496px;top:239px;font:13px 'Liberation Sans';color:#000">Local</div>
<div class="t" style="left:1496px;top:254px;font:13px 'Liberation Sans';color:#000">Help</div>
<svg style="left:1527px;top:259px" width="6" height="4" viewBox="0 0 6 4"><path d="M0 0H6L3 3.5Z" fill="#222"/></svg>
<svg style="left:1549px;top:206px" width="32" height="32" viewBox="0 0 32 32"><rect width="32" height="32" fill="#0b70d8"/><circle cx="13" cy="13" r="5" fill="#fff"/><path d="M5 30q0-10 8-10q8 0 8 10Z" fill="#fff"/><path d="M17 4h13v8h-6l-3 3v-3h-4z" fill="#fff"/></svg>
<div class="t" style="left:1538px;top:239px;font:13px 'Liberation Sans';color:#000">Feedback</div>
<div class="t" style="left:1555px;top:254px;font:13px 'Liberation Sans';color:#000">Hub</div>
<div class="t" style="left:1528px;top:276px;font:13px 'Liberation Sans';color:#8a8a8a">Help</div>
<div style="left:854px;top:297px;width:1011px;height:307px;background:#fff;border:1px solid #a0a0a0"></div>
<div style="left:855px;top:298px;width:1009px;height:21px;background:#eeeef2"></div>
<div class="t" style="left:857px;top:301px;font:13px 'Liberation Sans';color:#000">Disassembly</div>
<svg style="left:1801px;top:306px" width="9" height="5" viewBox="0 0 9 5"><path d="M0 0H9L4.5 4.5Z" fill="#222"/></svg>
<svg style="left:1822px;top:302px" width="13" height="13" viewBox="0 0 13 13"><path d="M7 1l5 5-2 1-3 3 0 2-5-5 2 0 3-3z" fill="none" stroke="#222" stroke-width="1"/><path d="M4 9l-3.5 3.5" stroke="#222" stroke-width="1"/></svg>
<svg style="left:1846px;top:303px" width="10" height="10" viewBox="0 0 10 10"><path d="M0.5 0.5L9.5 9.5M9.5 0.5L0.5 9.5" stroke="#222" stroke-width="1.3"/></svg>
<div class="t" style="left:860px;top:331px;font:13px 'Liberation Sans';color:#000">Address:</div>
<div style="left:914px;top:327px;width:300px;height:21px;background:#fff;border:1px solid #aaaaaa"></div>
<div class="t" style="left:919px;top:332px;font:11px 'Liberation Mono';color:#000">@$scopeip</div>
<svg style="left:1225px;top:329px" width="15" height="15" viewBox="0 0 15 15"><rect x="0.5" y="0.5" width="14" height="14" fill="#fff" stroke="#333"/><path d="M3 7.5l3 3 6-7" stroke="#111" stroke-width="1.5" fill="none"/></svg>
<div class="t" style="left:1245px;top:330px;font:13px 'Liberation Sans';color:#000">Follow current instruction</div>
<div style="left:862px;top:355px;width:985px;height:19px;background:#bdb683"></div>
<div style="left:862px;top:355px;width:985px;height:231px;overflow:hidden">
<div class="t" style="left:0;top:1.50px;font:14.67px 'Liberation Mono';line-height:18.73px">00000000 ?? <span style="color:#0000ff">???</span></div>
<div class="t" style="left:0;top:20.23px;font:14.67px 'Liberation Mono';line-height:18.73px">00000001 ?? <span style="color:#0000ff">???</span></div>
<div class="t" style="left:0;top:38.96px;font:14.67px 'Liberation Mono';line-height:18.73px">00000002 ?? <span style="color:#0000ff">???</span></div>
<div class="t" style="left:0;top:57.69px;font:14.67px 'Liberation Mono';line-height:18.73px">00000003 ?? <span style="color:#0000ff">???</span></div>
<div class="t" style="left:0;top:76.42px;font:14.67px 'Liberation Mono';line-height:18.73px">00000004 ?? <span style="color:#0000ff">???</span></div>
<div class="t" style="left:0;top:95.15px;font:14.67px 'Liberation Mono';line-height:18.73px">00000005 ?? <span style="color:#0000ff">???</span></div>
<div class="t" style="left:0;top:113.88px;font:14.67px 'Liberation Mono';line-height:18.73px">00000006 ?? <span style="color:#0000ff">???</span></div>
<div class="t" style="left:0;top:132.61px;font:14.67px 'Liberation Mono';line-height:18.73px">00000007 ?? <span style="color:#0000ff">???</span></div>
<div class="t" style="left:0;top:151.34px;font:14.67px 'Liberation Mono';line-height:18.73px">00000008 ?? <span style="color:#0000ff">???</span></div>
<div class="t" style="left:0;top:170.07px;font:14.67px 'Liberation Mono';line-height:18.73px">00000009 ?? <span style="color:#0000ff">???</span></div>
<div class="t" style="left:0;top:188.80px;font:14.67px 'Liberation Mono';line-height:18.73px">0000000a ?? <span style="color:#0000ff">???</span></div>
<div class="t" style="left:0;top:207.53px;font:14.67px 'Liberation Mono';line-height:18.73px">0000000b ?? <span style="color:#0000ff">???</span></div>
<div class="t" style="left:0;top:226.26px;font:14.67px 'Liberation Mono';line-height:18.73px">0000000c ?? <span style="color:#0000ff">???</span></div>
</div>
<div style="left:1847px;top:355px;width:17px;height:231px;background:#eeeef2"></div>
<div style="left:1848px;top:356px;width:15px;height:16px;background:#f4f4f6;border:1px solid #b0aca0"></div>
<svg style="left:1851px;top:362px" width="9" height="5" viewBox="0 0 9 5"><path d="M0 4.5L4.5 0L9 4.5Z" fill="#888"/></svg>
<div style="left:1848px;top:373px;width:15px;height:28px;background:#f4f4f6;border:1px solid #b0aca0"></div>
<div style="left:1848px;top:568px;width:15px;height:17px;background:#f4f4f6;border:1px solid #b0aca0"></div>
<svg style="left:1851px;top:575px" width="9" height="5" viewBox="0 0 9 5"><path d="M0 0H9L4.5 4.5Z" fill="#888"/></svg>
<div style="left:862px;top:586px;width:985px;height:17px;background:#eeeef2"></div>
<div style="left:863px;top:587px;width:18px;height:15px;background:#f4f4f6;border:1px solid #b0aca0"></div>
<svg style="left:869px;top:590px" width="5" height="9" viewBox="0 0 5 9"><path d="M4.5 0L0 4.5L4.5 9Z" fill="#888"/></svg>
<div style="left:881px;top:587px;width:885px;height:15px;background:#f4f4f6;border:1px solid #b0aca0"></div>
<div style="left:1829px;top:587px;width:17px;height:16px;background:#f4f4f6;border:1px solid #b0aca0"></div>
<svg style="left:1835px;top:591px" width="5" height="9" viewBox="0 0 5 9"><path d="M0 0L4.5 4.5L0 9Z" fill="#888"/></svg>
<div style="left:1870px;top:297px;width:60px;height:307px;background:#fff;border:1px solid #a0a0a0"></div>
<div style="left:1871px;top:298px;width:59px;height:21px;background:#eeeef2"></div>
<div class="t" style="left:1874px;top:301px;font:13px 'Liberation Sans';color:#000">Memory</div>
<div class="t" style="left:1876px;top:331px;font:13px 'Liberation Sans';color:#000">Address</div>
<div class="t" style="left:1876px;top:355.5px;font:11.5px 'Liberation Mono';color:#000;letter-spacing:-0.4px">00000000</div>
<div class="t" style="left:1876px;top:369.57px;font:11.5px 'Liberation Mono';color:#000;letter-spacing:-0.4px">00000000</div>
<div class="t" style="left:1876px;top:383.64px;font:11.5px 'Liberation Mono';color:#000;letter-spacing:-0.4px">00000000</div>
<div class="t" style="left:1876px;top:397.71px;font:11.5px 'Liberation Mono';color:#000;letter-spacing:-0.4px">00000000</div>
<div class="t" style="left:1876px;top:411.78px;font:11.5px 'Liberation Mono';color:#000;letter-spacing:-0.4px">00000000</div>
<div class="t" style="left:1876px;top:425.85px;font:11.5px 'Liberation Mono';color:#000;letter-spacing:-0.4px">00000000</div>
<div class="t" style="left:1876px;top:439.92px;font:11.5px 'Liberation Mono';color:#000;letter-spacing:-0.4px">00000000</div>
<div class="t" style="left:1876px;top:453.99px;font:11.5px 'Liberation Mono';color:#000;letter-spacing:-0.4px">00000000</div>
<div class="t" style="left:1876px;top:468.06px;font:11.5px 'Liberation Mono';color:#000;letter-spacing:-0.4px">00000000</div>
<div class="t" style="left:1876px;top:482.13px;font:11.5px 'Liberation Mono';color:#000;letter-spacing:-0.4px">00000000</div>
<div class="t" style="left:1876px;top:496.2px;font:11.5px 'Liberation Mono';color:#000;letter-spacing:-0.4px">00000000</div>
<div class="t" style="left:1876px;top:510.27px;font:11.5px 'Liberation Mono';color:#000;letter-spacing:-0.4px">00000000</div>
<div class="t" style="left:1876px;top:524.34px;font:11.5px 'Liberation Mono';color:#000;letter-spacing:-0.4px">00000000</div>
<div class="t" style="left:1876px;top:538.41px;font:11.5px 'Liberation Mono';color:#000;letter-spacing:-0.4px">00000000</div>
<div class="t" style="left:1876px;top:552.48px;font:11.5px 'Liberation Mono';color:#000;letter-spacing:-0.4px">00000000</div>
<div style="left:1871px;top:567px;width:49px;height:15px;background:#eeeef2"></div>
<div style="left:1872px;top:567px;width:16px;height:15px;background:#f4f4f6;border:1px solid #b0aca0"></div>
<svg style="left:1877px;top:570px" width="5" height="9" viewBox="0 0 5 9"><path d="M4.5 0L0 4.5L4.5 9Z" fill="#888"/></svg>
<div style="left:1889px;top:567px;width:40px;height:15px;background:#f4f4f6;border:1px solid #b0aca0"></div>
<div style="left:1871px;top:582px;width:49px;height:21px;background:#fff"></div>
<div class="t" style="left:1877px;top:586px;font:13px 'Liberation Sans';color:#000">Memory</div>
<div style="left:854px;top:609px;width:126px;height:20px;background:#0a72c6"></div>
<div class="t" style="left:858px;top:612px;font:13px 'Liberation Sans';color:#fff">Command</div>
<svg style="left:960px;top:614px" width="10" height="10" viewBox="0 0 10 10"><path d="M0.5 0.5L9.5 9.5M9.5 0.5L0.5 9.5" stroke="#fff" stroke-width="1"/></svg>
<div style="left:854px;top:629px;width:1066px;height:2px;background:#0a72c6"></div>
<div style="left:854px;top:631px;width:1066px;height:300px;background:#fff"></div>
<div style="left:854px;top:631px;width:1066px;height:295px;overflow:hidden">
<div style="left:8px;top:-9.50px;width:1058px;height:18.73px;background:#eeeeee"></div>
<div class="t" style="left:8px;top:-8.00px;font:14.67px 'Liberation Mono';line-height:18.73px;color:#000">||0:kd&gt; g</div>
<div class="t" style="left:8px;top:10.73px;font:14.67px 'Liberation Mono';line-height:18.73px;color:#000">Access violation - code c0000005 (!!! second chance !!!)</div>
<div class="t" style="left:8px;top:29.46px;font:14.67px 'Liberation Mono';line-height:18.73px;color:#000">00000000 ??              ???</div>
<div style="left:8px;top:46.69px;width:1058px;height:18.73px;background:#eeeeee"></div>
<div class="t" style="left:8px;top:48.19px;font:14.67px 'Liberation Mono';line-height:18.73px;color:#000">||0:kd&gt; r</div>
<div style="left:8px;top:65.42px;width:1058px;height:18.73px;background:#eeeeee"></div>
<div class="t" style="left:8px;top:66.92px;font:14.67px 'Liberation Mono';line-height:18.73px;color:#000">eax=ff9d0018 ebx=fe7ed021 ecx=ff9d0018 edx=00000000 esi=97238840 edi=00000000</div>
<div style="left:8px;top:84.15px;width:1058px;height:18.73px;background:#eeeeee"></div>
<div class="t" style="left:8px;top:85.65px;font:14.67px 'Liberation Mono';line-height:18.73px;color:#000">eip=00000000 esp=ad723b7c ebp=ad723bb0 iopl=0         nv up ei pl zr na pe nc</div>
<div style="left:8px;top:102.88px;width:1058px;height:18.73px;background:#eeeeee"></div>
<div class="t" style="left:8px;top:104.38px;font:14.67px 'Liberation Mono';line-height:18.73px;color:#000">cs=0008  ss=0010  ds=0023  es=0023  fs=0030  gs=0000             efl=00010246</div>
<div style="left:8px;top:121.61px;width:1058px;height:18.73px;background:#eeeeee"></div>
<div class="t" style="left:8px;top:123.11px;font:14.67px 'Liberation Mono';line-height:18.73px;color:#000">00000000 ??              ???</div>
<div class="t" style="left:8px;top:141.84px;font:14.67px 'Liberation Mono';line-height:18.73px;color:#000">||0:kd&gt; kv</div>
<div class="t" style="left:8px;top:160.57px;font:14.67px 'Liberation Mono';line-height:18.73px;color:#000"> # ChildEBP RetAddr  Args to Child              </div>
<div class="t" style="left:8px;top:179.30px;font:14.67px 'Liberation Mono';line-height:18.73px;color:#000">WARNING: Frame IP not in any known module. Following frames may be wrong.</div>
<div class="t" style="left:8px;top:198.03px;font:14.67px 'Liberation Mono';line-height:18.73px;color:#000"><span style="color:#0000ff;text-decoration:underline">00</span> ad723b78 971e9931 00213618 ad723bac 00000000 0x0</div>
<div class="t" style="left:8px;top:216.76px;font:14.67px 'Liberation Mono';line-height:18.73px;color:#000"><span style="color:#0000ff;text-decoration:underline">01</span> ad723bb0 971f0a90 00000000 00000000 ff9d0018 win32k!XEPALOBJ::ulAnimatePalette+0x18b (FPO: [Non-Fpo])</div>
<div class="t" style="left:8px;top:235.49px;font:14.67px 'Liberation Mono';line-height:18.73px;color:#000"><span style="color:#0000ff;text-decoration:underline">02</span> ad723bc8 970e28a1 fe7fe000 00000010 00000005 win32k!GreAnimatePalette+0x29 (FPO: [Non-Fpo])</div>
<div class="t" style="left:8px;top:254.22px;font:14.67px 'Liberation Mono';line-height:18.73px;color:#000"><span style="color:#0000ff;text-decoration:underline">03</span> ad723c14 83c488ba 6c080e5e 00000010 00000005 win32k!NtGdiDoPalette+0xc5 (FPO: [Non-Fpo])</div>
<div class="t" style="left:8px;top:272.95px;font:14.67px 'Liberation Mono';line-height:18.73px;color:#000"><span style="color:#0000ff;text-decoration:underline">04</span> ad723c14 772570b4 6c080e5e 00000010 00000005 nt!KiFastCallEntry+0x12a (FPO: [0,3] TrapFrame @ ad723c34)</div>
<div class="t" style="left:8px;top:291.68px;font:14.67px 'Liberation Mono';line-height:18.73px;color:#000"><span style="color:#0000ff;text-decoration:underline">05</span> ad723c34 00000000 00000000 00000000 00000000 ntdll!KiFastSystemCallRet (FPO: [0,0,0])</div>
</div>
<div style="left:854px;top:931px;width:1066px;height:19px;background:#fff;border-top:1px solid #b4b4b4;border-bottom:1px solid #b4b4b4"></div>
<div style="left:855px;top:932px;width:51px;height:17px;background:#eeeeee;border:1px solid #c0c0c0"></div>
<div class="t" style="left:858px;top:934px;font:13px 'Liberation Mono';color:#000;letter-spacing:-1.1px">||0:kd&gt;</div>
<div style="left:906px;top:932px;width:2px;height:17px;background:#c8c8c8"></div>
<div style="left:854px;top:950px;width:1066px;height:7px;background:#eeeef2"></div>
<div style="left:854px;top:957px;width:1066px;height:25px;background:#0078d0"></div>
</body></html>
